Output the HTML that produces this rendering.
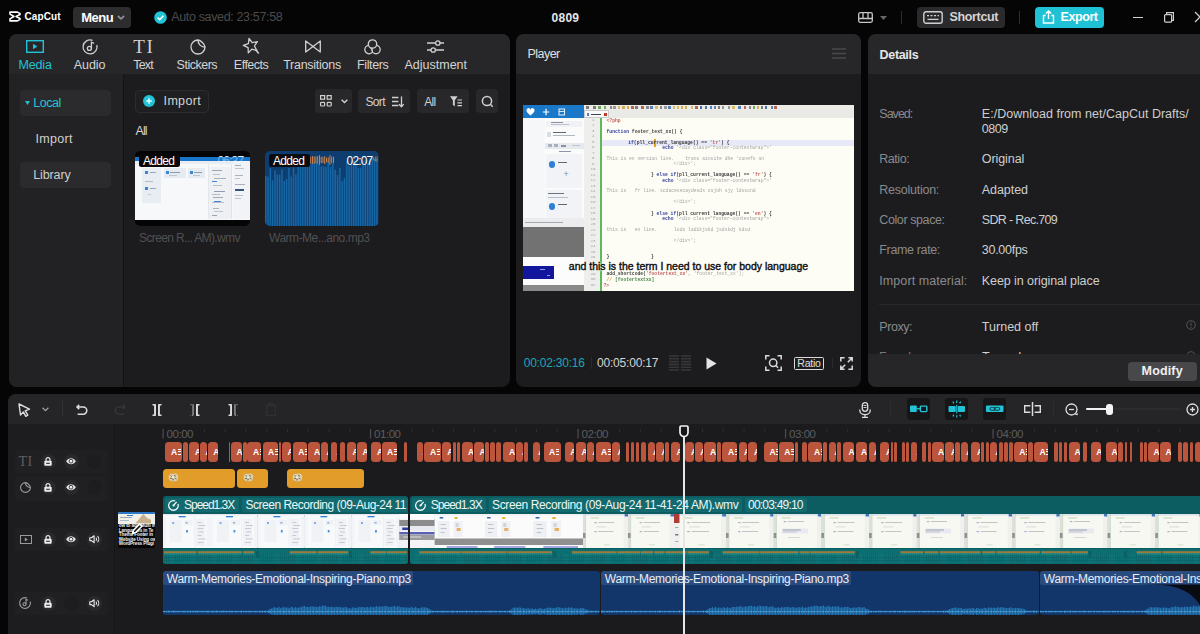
<!DOCTYPE html><html><head><meta charset="utf-8"><title>CapCut</title><style>
*{box-sizing:border-box;margin:0;padding:0}
html,body{width:1200px;height:634px;overflow:hidden;background:#050506;font-family:"Liberation Sans",sans-serif;color:#dcdcdc;font-size:12px}
.a{position:absolute}
.t{position:absolute;white-space:nowrap;line-height:1}
.panel{position:absolute;background:#1b1b1d;border-radius:8px;overflow:hidden}
.hdr{position:absolute;left:0;top:0;right:0;height:39.7px;background:#27272a}
svg{position:absolute;overflow:visible}
.btn{position:absolute;background:#2a2a2c;border-radius:4px}
.c{position:absolute;top:442px;height:19.5px;background:#bb553c;border-radius:3.5px;overflow:hidden}
.c::before{content:"A";position:absolute;left:5.6px;top:5.6px;font:bold 8.5px "Liberation Sans",sans-serif;color:#fff;line-height:1}
.c::after{content:"";position:absolute;left:12.3px;top:7.3px;width:3.2px;height:6px;background:linear-gradient(#fff 0 1px,transparent 1px 2.5px,#fff 2.5px 3.5px,transparent 3.5px 5px,#fff 5px 6px)}
</style></head><body>
<svg class="a" style="left:9px;top:11px" width="12" height="11" viewBox="0 0 13 12"><path d="M1 1.2h8.2l2.8 1.7v1L7.6 6l4.4 2.1v1L9.2 10.8H1V8.6L5.4 6 1 3.4z" fill="none" stroke="#fff" stroke-width="1.7" stroke-linejoin="round"/></svg>
<div class="t" style="left:24.5px;top:12px;font-size:10px;color:#fff;font-weight:700;letter-spacing:0.089px;">CapCut</div>
<div class="btn" style="left:73px;top:7px;width:57.5px;height:20.5px;background:#2d2d2f"></div>
<div class="t" style="left:81.2px;top:11px;font-size:13px;color:#fff;font-weight:700;letter-spacing:-0.481px;">Menu</div>
<svg style="left:116.5px;top:15px" width="8" height="5.5" viewBox="0 0 9 6"><path d="M1 1l3.5 3.2L8 1" fill="none" stroke="#8e8e90" stroke-width="2"/></svg>
<svg style="left:153.5px;top:11px" width="13" height="13" viewBox="0 0 13 13"><circle cx="6.5" cy="6.5" r="6.3" fill="#22c3d6"/><path d="M3.6 6.6l2.1 2 3.7-3.9" fill="none" stroke="#fff" stroke-width="1.5"/></svg>
<div class="t" style="left:171.2px;top:11.25px;font-size:12.5px;color:#4b4b4d;letter-spacing:-0.349px;">Auto saved: 23:57:58</div>
<div class="t" style="left:551.5px;top:11.5px;font-size:12px;color:#e6e6e6;font-weight:700;letter-spacing:0.268px;">0809</div>
<svg style="left:858px;top:12px" width="15" height="11" viewBox="0 0 15 11"><rect x="0.7" y="0.7" width="13.6" height="9.6" rx="1.5" fill="none" stroke="#c8c8c8" stroke-width="1.3"/><path d="M0.7 6.5h13.6M5 0.7v5.8M10 0.7v5.8" stroke="#c8c8c8" stroke-width="1.3"/></svg>
<svg style="left:880px;top:16px" width="7" height="4" viewBox="0 0 7 4"><path d="M0 0h7L3.5 4z" fill="#666"/></svg>
<div class="a" style="left:901px;top:11px;width:1px;height:13px;background:#2e2e30"></div>
<div class="btn" style="left:917px;top:6.5px;width:87.5px;height:21px;background:#2a2a2c"></div>
<svg style="left:923px;top:10.5px" width="20" height="13" viewBox="0 0 20 13"><rect x="0.8" y="0.8" width="18.4" height="11.4" rx="2.2" fill="none" stroke="#d0d0d0" stroke-width="1.4"/><path d="M4 4.6h2M7.5 4.6h2M11 4.6h2M14.5 4.6h1.5M4.5 8.4h11" stroke="#d0d0d0" stroke-width="1.3"/></svg>
<div class="t" style="left:949.5px;top:11.25px;font-size:12.5px;color:#d4d4d4;font-weight:700;letter-spacing:-0.34px;">Shortcut</div>
<div class="a" style="left:1019px;top:11px;width:1px;height:13px;background:#2e2e30"></div>
<div class="btn" style="left:1035px;top:6.5px;width:68.5px;height:21px;background:#1fc2d4"></div>
<svg style="left:1041.5px;top:9.5px" width="13" height="14" viewBox="0 0 13 14"><path d="M3.6 5.5H1.5v7.5h10V5.5H9.4M6.5 9V1.2M3.8 3.6L6.5 1l2.7 2.6" fill="none" stroke="#fff" stroke-width="1.4"/></svg>
<div class="t" style="left:1060.5px;top:11.25px;font-size:12.5px;color:#fff;font-weight:700;letter-spacing:-0.417px;">Export</div>
<div class="a" style="left:1133px;top:17px;width:10px;height:1.4px;background:#cfcfcf"></div>
<svg style="left:1164px;top:12px" width="10" height="11" viewBox="0 0 10 11"><rect x="0.6" y="2.6" width="7" height="7.6" rx="1" fill="none" stroke="#cfcfcf" stroke-width="1.2"/><path d="M2.6 2.4V0.7h6.8v7.6H7.8" fill="none" stroke="#cfcfcf" stroke-width="1.2"/></svg>
<svg style="left:1195px;top:12px" width="10" height="10" viewBox="0 0 10 10"><path d="M0 0l10 10M10 0L0 10" stroke="#cfcfcf" stroke-width="1.3"/></svg>
<div class="panel" style="left:9px;top:34px;width:500.5px;height:353px;background:#1c1c1e">
<div class="hdr"></div>
<div class="a" style="left:0;top:39.7px;width:113.5px;bottom:0;background:#222224"></div>
<div class="a" style="left:113.5px;top:39.7px;width:1px;bottom:0;background:#131315"></div>
</div>
<div class="t" style="left:18.4px;top:59.25px;font-size:12.5px;color:#22c3d6;letter-spacing:-0.111px;">Media</div>
<div class="t" style="left:73.7px;top:59.25px;font-size:12.5px;color:#d4d4d4;letter-spacing:-0.042px;">Audio</div>
<div class="t" style="left:133.2px;top:59.25px;font-size:12.5px;color:#d4d4d4;letter-spacing:-0.808px;">Text</div>
<div class="t" style="left:176.6px;top:59.25px;font-size:12.5px;color:#d4d4d4;letter-spacing:-0.493px;">Stickers</div>
<div class="t" style="left:233.8px;top:59.25px;font-size:12.5px;color:#d4d4d4;letter-spacing:-0.497px;">Effects</div>
<div class="t" style="left:283.2px;top:59.25px;font-size:12.5px;color:#d4d4d4;letter-spacing:-0.267px;">Transitions</div>
<div class="t" style="left:357px;top:59.25px;font-size:12.5px;color:#d4d4d4;letter-spacing:-0.371px;">Filters</div>
<div class="t" style="left:404.5px;top:59.25px;font-size:12.5px;color:#d4d4d4;letter-spacing:-0.003px;">Adjustment</div>
<svg style="left:26px;top:40px" width="18" height="13" viewBox="0 0 18 13"><rect x="0.7" y="0.7" width="16.6" height="11.6" fill="none" stroke="#22c3d6" stroke-width="1.4"/><path d="M7 3.8v5.4l4.4-2.7z" fill="#22c3d6"/></svg>
<svg style="left:81.5px;top:38.5px" width="16" height="16" viewBox="0 0 16 16"><path d="M10.6 1.4A7 7 0 1 0 14.8 6" fill="none" stroke="#d0d0d0" stroke-width="1.3"/><circle cx="7.4" cy="9.4" r="2" fill="none" stroke="#d0d0d0" stroke-width="1.3"/><path d="M9.4 9.4V3.2l2.6 1.2" fill="none" stroke="#d0d0d0" stroke-width="1.3"/></svg>
<div class="t" style="left:133.2px;top:36.5px;font-family:'Liberation Serif',serif;font-size:19px;color:#d0d0d0;letter-spacing:1.8px">TI</div>
<svg style="left:190px;top:39px" width="16" height="16" viewBox="0 0 16 16"><path d="M8 1a7 7 0 1 0 7 7c-3.6.400-7.4-3-7-7z" fill="none" stroke="#d0d0d0" stroke-width="1.3" stroke-linejoin="round"/><path d="M8 1c2.8.300 6.6 4 7 7" fill="none" stroke="#d0d0d0" stroke-width="1.3"/></svg>
<svg style="left:242.5px;top:38px" width="18" height="18" viewBox="0 0 18 18"><path d="M6 0.5L9.2 4.6L14.4 3.7L11.4 8L13.9 12.6L8.9 11.1L5.3 14.9L5.1 9.6L0.4 7.4L5.4 5.7z" fill="none" stroke="#d0d0d0" stroke-width="1.3" stroke-linejoin="round"/><path d="M13.2 12.6l2.6 2.8" stroke="#d0d0d0" stroke-width="1.5"/></svg>
<svg style="left:304.5px;top:40px" width="16" height="13" viewBox="0 0 16 13"><path d="M0.7 0.9v11.2L8 6.5zM15.3 0.9v11.2L8 6.5z" fill="none" stroke="#d0d0d0" stroke-width="1.3" stroke-linejoin="round"/></svg>
<svg style="left:364px;top:38.5px" width="17" height="16" viewBox="0 0 17 16"><circle cx="5" cy="10.6" r="4.2" fill="#27272a" stroke="#d0d0d0" stroke-width="1.3"/><circle cx="12" cy="10.6" r="4.2" fill="#27272a" stroke="#d0d0d0" stroke-width="1.3"/><circle cx="8.5" cy="5" r="4.2" fill="#27272a" stroke="#d0d0d0" stroke-width="1.3"/><path d="M6.4 8.7a4.2 4.2 0 0 1 2.1 3.6" fill="none" stroke="#d0d0d0" stroke-width="1.1"/></svg>
<svg style="left:427px;top:40px" width="17" height="13" viewBox="0 0 17 13"><path d="M0 3h8.5M13 3h4M0 10h4M8.5 10H17" stroke="#d0d0d0" stroke-width="1.3"/><circle cx="10.8" cy="3" r="2.2" fill="none" stroke="#d0d0d0" stroke-width="1.3"/><circle cx="6.2" cy="10" r="2.2" fill="none" stroke="#d0d0d0" stroke-width="1.3"/></svg>
<div class="btn" style="left:20px;top:89.5px;width:91px;height:26px;background:#2b2b2d;border-radius:4px"></div>
<svg style="left:25px;top:100.5px" width="5" height="4" viewBox="0 0 5 4"><path d="M0 0h5L2.5 4z" fill="#22c3d6"/></svg>
<div class="t" style="left:33.3px;top:96.75px;font-size:12.5px;color:#22c3d6;letter-spacing:-0.47px;">Local</div>
<div class="t" style="left:35.4px;top:133.25px;font-size:12.5px;color:#cfcfcf;letter-spacing:0.316px;">Import</div>
<div class="btn" style="left:20px;top:162px;width:91px;height:26px;background:#2b2b2d;border-radius:4px"></div>
<div class="t" style="left:33.3px;top:169.25px;font-size:12.5px;color:#cfcfcf;letter-spacing:-0.134px;">Library</div>
<div class="btn" style="left:135px;top:89.5px;width:74px;height:23px;background:#1f1f21;border:1px solid #2c2c2e"></div>
<svg style="left:142.5px;top:95px" width="12" height="12" viewBox="0 0 12 12"><circle cx="6" cy="6" r="6" fill="#22c3d6"/><path d="M6 3.2v5.6M3.2 6h5.6" stroke="#e8ffff" stroke-width="1.5"/></svg>
<div class="t" style="left:163.6px;top:95.25px;font-size:12.5px;color:#d4d4d4;letter-spacing:0.316px;">Import</div>
<div class="t" style="left:135.6px;top:125.25px;font-size:12.5px;color:#d4d4d4;letter-spacing:-0.946px;">All</div>
<div class="btn" style="left:314.5px;top:89px;width:37px;height:23.5px;background:#28282a"></div>
<div class="btn" style="left:357.5px;top:89px;width:52.5px;height:23.5px;background:#28282a"></div>
<div class="btn" style="left:416.5px;top:89px;width:52.5px;height:23.5px;background:#28282a"></div>
<div class="btn" style="left:475.5px;top:89px;width:22px;height:23.5px;background:#28282a"></div>
<svg style="left:319.5px;top:95px" width="12" height="12" viewBox="0 0 12 12"><rect x="0.6" y="0.6" width="4" height="3.6" fill="none" stroke="#d0d0d0" stroke-width="1.2"/><rect x="7.2" y="0.6" width="4" height="3.6" fill="none" stroke="#d0d0d0" stroke-width="1.2"/><rect x="0.6" y="7.4" width="4" height="3.6" rx="0.8" fill="none" stroke="#d0d0d0" stroke-width="1.2"/><rect x="7.2" y="7.4" width="4" height="3.6" rx="0.8" fill="none" stroke="#d0d0d0" stroke-width="1.2"/></svg>
<svg style="left:340.5px;top:99px" width="7" height="5" viewBox="0 0 7 5"><path d="M0.6 0.8l2.9 2.8L6.4 0.8" fill="none" stroke="#d0d0d0" stroke-width="1.4"/></svg>
<div class="t" style="left:365.5px;top:95.5px;font-size:12px;color:#d0d0d0;letter-spacing:-0.669px;">Sort</div>
<svg style="left:391.5px;top:95.5px" width="12" height="12" viewBox="0 0 12 12"><path d="M0 1.5h6.4M0 5.5h6.4M0 9.5h6.4M9.5 0.5v10M7 8.2l2.5 2.6 2.2-2.6" fill="none" stroke="#d0d0d0" stroke-width="1.3"/></svg>
<div class="t" style="left:424.2px;top:95.5px;font-size:12px;color:#d0d0d0;letter-spacing:-0.668px;">All</div>
<svg style="left:450px;top:96px" width="12" height="11" viewBox="0 0 12 11"><path d="M0 0.3h7.6L4.8 4.2v6L2.9 9V4.2z" fill="#d0d0d0"/><path d="M7.4 4h4.6M7.4 6.8h4.6M7.4 9.6h4.6" stroke="#d0d0d0" stroke-width="1.2"/></svg>
<svg style="left:480.5px;top:95px" width="13" height="13" viewBox="0 0 13 13"><circle cx="6" cy="6" r="4.6" fill="none" stroke="#d0d0d0" stroke-width="1.5"/><path d="M9.3 9.3l2.4 2.4" stroke="#d0d0d0" stroke-width="1.5"/></svg>
<div class="a" style="left:135px;top:151px;width:114.5px;height:75px;background:#050506;border-radius:5px;overflow:hidden">
<div class="a" style="left:0;top:5.5px;width:100%;height:63px;background:#f7f8fa"></div>
<div class="a" style="left:0;top:5.5px;width:100%;height:4.5px;background:#1877c9"></div>
<div class="a" style="left:0px;top:10px;width:114.5px;height:3px;background:#e9ecf1"></div>
<div class="a" style="left:6.5px;top:17px;width:19px;height:35px;background:#e8ecf3"></div>
<div class="a" style="left:10px;top:20px;width:3px;height:3px;background:#3b86d2"></div>
<div class="a" style="left:15px;top:21px;width:6px;height:1.2px;background:#9aa7b8"></div>
<div class="a" style="left:10px;top:36px;width:3px;height:3px;background:#3b86d2"></div>
<div class="a" style="left:15px;top:37px;width:6px;height:1.2px;background:#9aa7b8"></div>
<div class="a" style="left:10px;top:30px;width:8px;height:1px;background:#b5bcc8"></div>
<div class="a" style="left:13px;top:43px;width:3px;height:1px;background:#c4c9d2"></div>
<div class="a" style="left:28.5px;top:17px;width:22px;height:10px;background:#e6eaf1"></div>
<div class="a" style="left:31px;top:20px;width:2.5px;height:2.5px;background:#3b86d2"></div>
<div class="a" style="left:35px;top:20.5px;width:10px;height:1.2px;background:#8f9bb0"></div>
<div class="a" style="left:34px;top:24px;width:8px;height:0.8px;background:#c0c6d0"></div>
<div class="a" style="left:53px;top:17px;width:17px;height:10px;background:#e6eaf1"></div>
<div class="a" style="left:55px;top:20px;width:2.5px;height:2.5px;background:#3b86d2"></div>
<div class="a" style="left:59px;top:20.5px;width:8px;height:1.2px;background:#8f9bb0"></div>
<div class="a" style="left:58px;top:24px;width:7px;height:0.8px;background:#c0c6d0"></div>
<div class="a" style="left:73.5px;top:16px;width:22px;height:52px;background:#eef0f4"></div>
<div class="a" style="left:77px;top:19px;width:10px;height:1px;background:#9aa5b5"></div>
<div class="a" style="left:78px;top:23px;width:7px;height:1px;background:#b9c0cc"></div>
<div class="a" style="left:79px;top:27px;width:12px;height:1px;background:#a8b2c0"></div>
<div class="a" style="left:77px;top:30px;width:5px;height:1px;background:#3b86d2"></div>
<div class="a" style="left:78px;top:34px;width:9px;height:1px;background:#b9c0cc"></div>
<div class="a" style="left:79px;top:40px;width:11px;height:1px;background:#8f9bb0"></div>
<div class="a" style="left:77px;top:43px;width:8px;height:1px;background:#b9c0cc"></div>
<div class="a" style="left:78px;top:46px;width:10px;height:1px;background:#a0aab8"></div>
<div class="a" style="left:79px;top:50px;width:7px;height:1px;background:#3b86d2"></div>
<div class="a" style="left:77px;top:51px;width:12px;height:1px;background:#b9c0cc"></div>
<div class="a" style="left:78px;top:57px;width:6px;height:1px;background:#a8b2c0"></div>
<div class="a" style="left:79px;top:60px;width:9px;height:1px;background:#c0c6d0"></div>
<div class="a" style="left:77px;top:64px;width:5px;height:1px;background:#9aa5b5"></div>
<div class="a" style="left:97.5px;top:10px;width:17px;height:58px;background:#f1f3f6"></div>
<div class="a" style="left:100px;top:14px;width:6px;height:1.2px;background:#a0aab8"></div>
<div class="a" style="left:100px;top:17px;width:9px;height:1.2px;background:#c0c6d0"></div>
<div class="a" style="left:100px;top:24px;width:8px;height:1.2px;background:#a8b2c0"></div>
<div class="a" style="left:100px;top:27px;width:5px;height:1.2px;background:#c0c6d0"></div>
<div class="a" style="left:100px;top:33px;width:10px;height:1.2px;background:#a8b2c0"></div>
<div class="a" style="left:100px;top:38px;width:9px;height:1.6px;background:#35527a"></div>
<div class="a" style="left:100px;top:44px;width:8px;height:1.2px;background:#b9c0cc"></div>
<div class="a" style="left:100px;top:47px;width:6px;height:1.2px;background:#c0c6d0"></div>
<div class="a" style="left:96px;top:13px;width:0.6px;height:55px;background:#dfe3ea"></div>
<div class="a" style="left:72.5px;top:13px;width:0.6px;height:55px;background:#e4e7ec"></div>
<div class="t" style="left:82.5px;top:3.8px;font-size:12px;color:#e6f3ff;letter-spacing:-0.857px;">06:37</div>
<div class="a" style="left:0;top:5.5px;width:100%;height:4.5px;background:#1877c9;opacity:.55"></div>
<div class="a" style="left:4px;top:3px;width:40.5px;height:13px;background:#08080a;border-radius:2.5px"></div>
<div class="t" style="left:8px;top:4px;font-size:12px;color:#fff;letter-spacing:-0.675px;">Added</div>
</div>
<div class="t" style="left:139px;top:231.5px;font-size:12px;color:#505052;letter-spacing:-0.622px;">Screen R... AM).wmv</div>
<svg style="left:265px;top:151px;border-radius:5px;overflow:hidden" width="113.5" height="75" viewBox="0 0 113.5 75"><rect width="113.5" height="75" fill="#0e3e70"/><rect x="0" y="24.7" width="1.47" height="50.3" fill="#1767a6"/><rect x="2.32" y="25.7" width="1.47" height="49.3" fill="#1767a6"/><rect x="4.63" y="17" width="1.47" height="58" fill="#1767a6"/><rect x="6.95" y="29.4" width="1.47" height="45.6" fill="#1767a6"/><rect x="9.27" y="19.7" width="1.47" height="55.3" fill="#1767a6"/><rect x="11.58" y="23.5" width="1.47" height="51.5" fill="#1767a6"/><rect x="13.9" y="23.6" width="1.47" height="51.4" fill="#1767a6"/><rect x="16.21" y="18.4" width="1.47" height="56.6" fill="#1767a6"/><rect x="18.53" y="29.9" width="1.47" height="45.1" fill="#1767a6"/><rect x="20.85" y="27.9" width="1.47" height="47.1" fill="#1767a6"/><rect x="23.16" y="17" width="1.47" height="58" fill="#1767a6"/><rect x="25.48" y="25.5" width="1.47" height="49.5" fill="#1767a6"/><rect x="27.8" y="16.5" width="1.47" height="58.5" fill="#1767a6"/><rect x="30.11" y="23.6" width="1.47" height="51.4" fill="#1767a6"/><rect x="32.43" y="15.2" width="1.47" height="59.8" fill="#1767a6"/><rect x="34.74" y="15.4" width="1.47" height="59.6" fill="#1767a6"/><rect x="37.06" y="14.6" width="1.47" height="60.4" fill="#1767a6"/><rect x="39.38" y="15.5" width="1.47" height="59.5" fill="#1767a6"/><rect x="41.69" y="9.7" width="1.47" height="65.3" fill="#1767a6"/><rect x="44.01" y="10.5" width="1.47" height="64.5" fill="#1767a6"/><rect x="46.33" y="12.1" width="1.47" height="62.9" fill="#1767a6"/><rect x="48.64" y="11.1" width="1.47" height="63.9" fill="#1767a6"/><rect x="50.96" y="11.7" width="1.47" height="63.3" fill="#1767a6"/><rect x="53.28" y="13.1" width="1.47" height="61.9" fill="#1767a6"/><rect x="55.59" y="15.3" width="1.47" height="59.7" fill="#1767a6"/><rect x="57.91" y="15.5" width="1.47" height="59.5" fill="#1767a6"/><rect x="60.22" y="15.9" width="1.47" height="59.1" fill="#1767a6"/><rect x="62.54" y="10.1" width="1.47" height="64.9" fill="#1767a6"/><rect x="64.86" y="15.8" width="1.47" height="59.2" fill="#1767a6"/><rect x="67.17" y="13" width="1.47" height="62" fill="#1767a6"/><rect x="69.49" y="19" width="1.47" height="56" fill="#1767a6"/><rect x="71.81" y="24" width="1.47" height="51" fill="#1767a6"/><rect x="74.12" y="16.9" width="1.47" height="58.1" fill="#1767a6"/><rect x="76.44" y="29.9" width="1.47" height="45.1" fill="#1767a6"/><rect x="78.76" y="27.2" width="1.47" height="47.8" fill="#1767a6"/><rect x="81.07" y="10.2" width="1.47" height="64.8" fill="#1767a6"/><rect x="83.39" y="15.2" width="1.47" height="59.8" fill="#1767a6"/><rect x="85.7" y="9.4" width="1.47" height="65.6" fill="#1767a6"/><rect x="88.02" y="9.4" width="1.47" height="65.6" fill="#1767a6"/><rect x="90.34" y="11.6" width="1.47" height="63.4" fill="#1767a6"/><rect x="92.65" y="16.8" width="1.47" height="58.2" fill="#1767a6"/><rect x="94.97" y="17" width="1.47" height="58" fill="#1767a6"/><rect x="97.29" y="9.6" width="1.47" height="65.4" fill="#1767a6"/><rect x="99.6" y="9.3" width="1.47" height="65.7" fill="#1767a6"/><rect x="101.92" y="12.3" width="1.47" height="62.7" fill="#1767a6"/><rect x="104.23" y="8" width="1.47" height="67" fill="#1767a6"/><rect x="106.55" y="8" width="1.47" height="67" fill="#1767a6"/><rect x="108.87" y="8" width="1.47" height="67" fill="#1767a6"/><rect x="111.18" y="8" width="1.47" height="67" fill="#1767a6"/><rect x="43.5" y="5.9" width="0.9" height="6.2" fill="#e08b4a"/><rect x="45.25" y="5.7" width="0.9" height="6.6" fill="#e08b4a"/><rect x="47" y="5.2" width="0.9" height="7.5" fill="#e08b4a"/><rect x="48.75" y="5.4" width="0.9" height="7.2" fill="#e08b4a"/><rect x="50.5" y="5.5" width="0.9" height="6.9" fill="#e08b4a"/><rect x="52.25" y="5.3" width="0.9" height="7.3" fill="#e08b4a"/><rect x="54" y="4.2" width="0.9" height="9.6" fill="#e08b4a"/><rect x="55.75" y="5.7" width="0.9" height="6.5" fill="#e08b4a"/><rect x="57.5" y="6" width="0.9" height="6" fill="#e08b4a"/><rect x="59.25" y="5" width="0.9" height="8" fill="#e08b4a"/><rect x="61" y="6.7" width="0.9" height="4.7" fill="#e08b4a"/><rect x="62.75" y="6.4" width="0.9" height="5.1" fill="#e08b4a"/><rect x="64.5" y="4.1" width="0.9" height="9.8" fill="#e08b4a"/><rect x="66.25" y="5.7" width="0.9" height="6.6" fill="#e08b4a"/><rect x="68" y="5.6" width="0.9" height="6.8" fill="#e08b4a"/><rect x="108" y="6.5" width="0.9" height="3" fill="#e08b4a" opacity=".8"/><rect x="109.8" y="5.7" width="0.9" height="4.7" fill="#e08b4a" opacity=".8"/><rect x="111.6" y="5.3" width="0.9" height="5.3" fill="#e08b4a" opacity=".8"/></svg>
<div class="a" style="left:269px;top:154px;width:40.5px;height:13px;background:#0a0c10;border-radius:2.5px"></div>
<div class="t" style="left:273px;top:155px;font-size:12px;color:#fff;letter-spacing:-0.675px;">Added</div>
<div class="t" style="left:346.6px;top:155px;font-size:12px;color:#fff;letter-spacing:-0.857px;">02:07</div>
<div class="t" style="left:269px;top:231.5px;font-size:12px;color:#505052;letter-spacing:-0.495px;">Warm-Me...ano.mp3</div>
<div class="panel" style="left:516px;top:34px;width:344.5px;height:353px;background:#1c1c1e"><div class="hdr"></div></div>
<div class="t" style="left:527.5px;top:48.25px;font-size:12.5px;color:#e0e0e0;letter-spacing:-0.546px;">Player</div>
<svg style="left:832px;top:48px" width="14" height="11" viewBox="0 0 14 11"><path d="M0 1h14M0 5.5h14M0 10h14" stroke="#4a4a4c" stroke-width="1.4"/></svg>
<div class="a" style="left:523px;top:104.7px;width:331px;height:186px;background:#fdfdf6;overflow:hidden">
<div class="a" style="left:0px;top:0px;width:61px;height:13px;background:#1a78c8;"></div>
<div class="a" style="left:0px;top:13px;width:61px;height:101px;background:#f6f7f9;"></div>
<svg style="left:3px;top:3px" width="44" height="8" viewBox="0 0 44 8"><path d="M4.5 7.5C2 5.5 0.5 4 0.5 2.5A2 2 0 0 1 4.5 1.8 2 2 0 0 1 8.5 2.5C8.5 4 7 5.5 4.5 7.5z" fill="#fff"/><path d="M20 0.8v6.4M16.8 4h6.4" stroke="#fff" stroke-width="1.2"/><rect x="33" y="1" width="5.5" height="6" fill="none" stroke="#fff" stroke-width="0.9"/><path d="M33 3.5h5.5" stroke="#fff" stroke-width="0.8"/></svg>
<div class="a" style="left:22px;top:14px;width:39px;height:100px;background:#fbfbfc;"></div>
<div class="a" style="left:23px;top:16px;width:36px;height:6px;background:#f0f2f5;"></div>
<div class="a" style="left:28px;top:17px;width:12px;height:1px;background:#8b93a0;"></div>
<div class="a" style="left:28px;top:19.5px;width:18px;height:0.8px;background:#bcc2cc;"></div>
<div class="a" style="left:24px;top:27px;width:4px;height:5px;background:#d8dce3;"></div>
<div class="a" style="left:30px;top:27.5px;width:13px;height:1.2px;background:#5f6875;"></div>
<div class="a" style="left:30px;top:30.5px;width:22px;height:0.8px;background:#b0b6c0;"></div>
<div class="a" style="left:22px;top:38px;width:39px;height:6px;background:#e6e9ee;"></div>
<div class="a" style="left:25px;top:39.5px;width:4px;height:3px;background:#a9b0bb;"></div>
<div class="a" style="left:31px;top:39.5px;width:4px;height:3px;background:#a9b0bb;"></div>
<div class="a" style="left:38px;top:40px;width:5px;height:2px;background:#8b93a0;"></div>
<div class="a" style="left:49px;top:40px;width:8px;height:1px;background:#c0c5cd;"></div>
<div class="a" style="left:36px;top:46px;width:12px;height:1.5px;background:#8d96a6;"></div>
<div class="a" style="left:23px;top:49px;width:36px;height:34px;background:#f1f3f6;"></div>
<div class="a" style="left:25.5px;top:56.5px;width:6.5px;height:6.5px;border-radius:50%;background:#2f7fd6"></div>
<div class="a" style="left:35px;top:57px;width:9px;height:1.2px;background:#5f6875;"></div>
<div class="t" style="left:40.5px;top:65px;font-size:9px;color:#8a919c">+</div>
<div class="a" style="left:23px;top:85px;width:36px;height:29px;background:#f1f3f6;"></div>
<div class="a" style="left:25px;top:88px;width:16px;height:1.2px;background:#6a7380;"></div>
<div class="a" style="left:25px;top:92px;width:20px;height:0.8px;background:#b8bec8;"></div>
<div class="a" style="left:25.5px;top:98.5px;width:6.5px;height:6.5px;border-radius:50%;background:#2f7fd6"></div>
<div class="a" style="left:35px;top:99.5px;width:9px;height:1.2px;background:#5f6875;"></div>
<div class="a" style="left:0px;top:113px;width:61px;height:9px;background:#ececee;"></div>
<div class="a" style="left:2px;top:117px;width:38px;height:0.9px;background:#a5a8ae;"></div>
<div class="a" style="left:0px;top:122.5px;width:61px;height:29.5px;background:#727272;"></div>
<div class="a" style="left:0px;top:152px;width:61px;height:35px;background:#fcfcfc;"></div>
<div class="a" style="left:0px;top:161.5px;width:30.5px;height:13.3px;background:#12169c;"></div>
<div class="a" style="left:0px;top:180.5px;width:61px;height:6px;background:#8a8a8a;"></div>
<div class="a" style="left:17px;top:164px;width:5px;height:0.8px;background:#8f9be0;"></div>
<div class="a" style="left:24px;top:170px;width:3px;height:0.8px;background:#8f9be0;"></div>
<div class="a" style="left:61px;top:0px;width:270px;height:5.5px;background:#ecebe6;"></div>
<div class="a" style="left:63px;top:1px;width:3px;height:3.5px;background:#666;opacity:.85"></div>
<div class="a" style="left:69.5px;top:1px;width:3px;height:3.5px;background:#666;opacity:.85"></div>
<div class="a" style="left:74.5px;top:1px;width:3px;height:3.5px;background:#5a9a4a;opacity:.85"></div>
<div class="a" style="left:81px;top:1px;width:2px;height:3.5px;background:#5a9a4a;opacity:.85"></div>
<div class="a" style="left:86.5px;top:1px;width:2px;height:3.5px;background:#777;opacity:.85"></div>
<div class="a" style="left:90px;top:1px;width:3px;height:3.5px;background:#888;opacity:.85"></div>
<div class="a" style="left:94.5px;top:1px;width:2.5px;height:3.5px;background:#d0b050;opacity:.85"></div>
<div class="a" style="left:99px;top:1px;width:3px;height:3.5px;background:#c9a23a;opacity:.85"></div>
<div class="a" style="left:103.5px;top:1px;width:2px;height:3.5px;background:#c9a23a;opacity:.85"></div>
<div class="a" style="left:107.5px;top:1px;width:3px;height:3.5px;background:#b04a3a;opacity:.85"></div>
<div class="a" style="left:112px;top:1px;width:2.5px;height:3.5px;background:#666;opacity:.85"></div>
<div class="a" style="left:118px;top:1px;width:3px;height:3.5px;background:#b04a3a;opacity:.85"></div>
<div class="a" style="left:123px;top:1px;width:2.5px;height:3.5px;background:#777;opacity:.85"></div>
<div class="a" style="left:127px;top:1px;width:2.5px;height:3.5px;background:#3d6fb5;opacity:.85"></div>
<div class="a" style="left:132px;top:1px;width:3px;height:3.5px;background:#d0b050;opacity:.85"></div>
<div class="a" style="left:136.5px;top:1px;width:2.5px;height:3.5px;background:#777;opacity:.85"></div>
<div class="a" style="left:141px;top:1px;width:2.5px;height:3.5px;background:#888;opacity:.85"></div>
<div class="a" style="left:145px;top:1px;width:3px;height:3.5px;background:#3d6fb5;opacity:.85"></div>
<div class="a" style="left:149.5px;top:1px;width:2px;height:3.5px;background:#d0b050;opacity:.85"></div>
<div class="a" style="left:154px;top:1px;width:2px;height:3.5px;background:#d0b050;opacity:.85"></div>
<div class="a" style="left:157.5px;top:1px;width:2px;height:3.5px;background:#c9a23a;opacity:.85"></div>
<div class="a" style="left:161.5px;top:1px;width:2.5px;height:3.5px;background:#c9a23a;opacity:.85"></div>
<div class="a" style="left:167.5px;top:1px;width:2.5px;height:3.5px;background:#d0b050;opacity:.85"></div>
<div class="a" style="left:171.5px;top:1px;width:3px;height:3.5px;background:#b04a3a;opacity:.85"></div>
<div class="a" style="left:177px;top:1px;width:2px;height:3.5px;background:#2a5aa0;opacity:.85"></div>
<div class="a" style="left:181.5px;top:1px;width:2px;height:3.5px;background:#2a5aa0;opacity:.85"></div>
<div class="a" style="left:187px;top:1px;width:2px;height:3.5px;background:#3d6fb5;opacity:.85"></div>
<div class="a" style="left:191px;top:1px;width:2px;height:3.5px;background:#3d6fb5;opacity:.85"></div>
<div class="a" style="left:194.5px;top:1px;width:2.5px;height:3.5px;background:#666;opacity:.85"></div>
<div class="a" style="left:199px;top:1px;width:2px;height:3.5px;background:#888;opacity:.85"></div>
<div class="a" style="left:204.5px;top:1px;width:2px;height:3.5px;background:#888;opacity:.85"></div>
<div class="a" style="left:208.5px;top:1px;width:3px;height:3.5px;background:#d0b050;opacity:.85"></div>
<div class="a" style="left:215px;top:1px;width:2.5px;height:3.5px;background:#3d6fb5;opacity:.85"></div>
<div class="a" style="left:221px;top:1px;width:2px;height:3.5px;background:#b04a3a;opacity:.85"></div>
<div class="a" style="left:225.5px;top:1px;width:2px;height:3.5px;background:#777;opacity:.85"></div>
<div class="a" style="left:229.5px;top:1px;width:2.5px;height:3.5px;background:#5a9a4a;opacity:.85"></div>
<div class="a" style="left:233.5px;top:1px;width:2px;height:3.5px;background:#c9a23a;opacity:.85"></div>
<div class="a" style="left:237.5px;top:1px;width:2.5px;height:3.5px;background:#666;opacity:.85"></div>
<div class="a" style="left:241.5px;top:1px;width:2.5px;height:3.5px;background:#2a5aa0;opacity:.85"></div>
<div class="a" style="left:247.5px;top:1px;width:2px;height:3.5px;background:#3d6fb5;opacity:.85"></div>
<div class="a" style="left:251px;top:1px;width:3px;height:3.5px;background:#b04a3a;opacity:.85"></div>
<div class="a" style="left:61px;top:5.5px;width:270px;height:7.5px;background:#e9e9e6;"></div>
<div class="a" style="left:61px;top:5.5px;width:25px;height:7.5px;background:#fafafa;border:0.5px solid #c8c8c8"></div>
<div class="a" style="left:64px;top:8px;width:2px;height:3px;background:#5a7fc0;"></div>
<div class="a" style="left:68px;top:9px;width:10px;height:1.3px;background:#444;"></div>
<div class="a" style="left:81px;top:8px;width:2.5px;height:3px;background:#c0392b;"></div>
<div class="a" style="left:61px;top:13px;width:16px;height:174px;background:#eeeeec;"></div>
<div class="a" style="left:77px;top:13px;width:1.6px;height:174px;background:#5cb85c;"></div>
<div class="t" style="left:69px;top:13.1px;font-family:'Liberation Mono',monospace;font-size:4.2px;color:#8a8a8a;opacity:.75">1</div>
<div class="t" style="left:69px;top:18.6px;font-family:'Liberation Mono',monospace;font-size:4.2px;color:#8a8a8a;opacity:.75">2</div>
<div class="t" style="left:69px;top:24.1px;font-family:'Liberation Mono',monospace;font-size:4.2px;color:#8a8a8a;opacity:.75">3</div>
<div class="t" style="left:69px;top:29.6px;font-family:'Liberation Mono',monospace;font-size:4.2px;color:#8a8a8a;opacity:.75">4</div>
<div class="t" style="left:69px;top:35.1px;font-family:'Liberation Mono',monospace;font-size:4.2px;color:#8a8a8a;opacity:.75">5</div>
<div class="t" style="left:69px;top:40.6px;font-family:'Liberation Mono',monospace;font-size:4.2px;color:#8a8a8a;opacity:.75">6</div>
<div class="t" style="left:69px;top:46.1px;font-family:'Liberation Mono',monospace;font-size:4.2px;color:#8a8a8a;opacity:.75">7</div>
<div class="t" style="left:69px;top:51.6px;font-family:'Liberation Mono',monospace;font-size:4.2px;color:#8a8a8a;opacity:.75">8</div>
<div class="t" style="left:69px;top:57.1px;font-family:'Liberation Mono',monospace;font-size:4.2px;color:#8a8a8a;opacity:.75">9</div>
<div class="t" style="left:67.5px;top:62.6px;font-family:'Liberation Mono',monospace;font-size:4.2px;color:#8a8a8a;opacity:.75">10</div>
<div class="t" style="left:67.5px;top:68.1px;font-family:'Liberation Mono',monospace;font-size:4.2px;color:#8a8a8a;opacity:.75">11</div>
<div class="t" style="left:67.5px;top:73.6px;font-family:'Liberation Mono',monospace;font-size:4.2px;color:#8a8a8a;opacity:.75">12</div>
<div class="t" style="left:67.5px;top:79.1px;font-family:'Liberation Mono',monospace;font-size:4.2px;color:#8a8a8a;opacity:.75">13</div>
<div class="t" style="left:67.5px;top:84.6px;font-family:'Liberation Mono',monospace;font-size:4.2px;color:#8a8a8a;opacity:.75">14</div>
<div class="t" style="left:67.5px;top:90.1px;font-family:'Liberation Mono',monospace;font-size:4.2px;color:#8a8a8a;opacity:.75">15</div>
<div class="t" style="left:67.5px;top:95.6px;font-family:'Liberation Mono',monospace;font-size:4.2px;color:#8a8a8a;opacity:.75">16</div>
<div class="t" style="left:67.5px;top:101.1px;font-family:'Liberation Mono',monospace;font-size:4.2px;color:#8a8a8a;opacity:.75">17</div>
<div class="t" style="left:67.5px;top:106.6px;font-family:'Liberation Mono',monospace;font-size:4.2px;color:#8a8a8a;opacity:.75">18</div>
<div class="t" style="left:67.5px;top:112.1px;font-family:'Liberation Mono',monospace;font-size:4.2px;color:#8a8a8a;opacity:.75">19</div>
<div class="t" style="left:67.5px;top:117.6px;font-family:'Liberation Mono',monospace;font-size:4.2px;color:#8a8a8a;opacity:.75">20</div>
<div class="t" style="left:67.5px;top:123.1px;font-family:'Liberation Mono',monospace;font-size:4.2px;color:#8a8a8a;opacity:.75">21</div>
<div class="t" style="left:67.5px;top:128.6px;font-family:'Liberation Mono',monospace;font-size:4.2px;color:#8a8a8a;opacity:.75">22</div>
<div class="t" style="left:67.5px;top:134.1px;font-family:'Liberation Mono',monospace;font-size:4.2px;color:#8a8a8a;opacity:.75">23</div>
<div class="t" style="left:67.5px;top:139.6px;font-family:'Liberation Mono',monospace;font-size:4.2px;color:#8a8a8a;opacity:.75">24</div>
<div class="t" style="left:67.5px;top:145.1px;font-family:'Liberation Mono',monospace;font-size:4.2px;color:#8a8a8a;opacity:.75">25</div>
<div class="t" style="left:67.5px;top:150.6px;font-family:'Liberation Mono',monospace;font-size:4.2px;color:#8a8a8a;opacity:.75">26</div>
<div class="t" style="left:67.5px;top:156.1px;font-family:'Liberation Mono',monospace;font-size:4.2px;color:#8a8a8a;opacity:.75">27</div>
<div class="t" style="left:67.5px;top:161.6px;font-family:'Liberation Mono',monospace;font-size:4.2px;color:#8a8a8a;opacity:.75">28</div>
<div class="t" style="left:67.5px;top:167.1px;font-family:'Liberation Mono',monospace;font-size:4.2px;color:#8a8a8a;opacity:.75">29</div>
<div class="t" style="left:67.5px;top:172.6px;font-family:'Liberation Mono',monospace;font-size:4.2px;color:#8a8a8a;opacity:.75">30</div>
<div class="t" style="left:67.5px;top:178.1px;font-family:'Liberation Mono',monospace;font-size:4.2px;color:#8a8a8a;opacity:.75">31</div>
<div class="a" style="left:79px;top:35.5px;width:252px;height:6px;background:#e7e8f8;"></div>
<div class="a" style="left:130.5px;top:34px;width:2px;height:8px;background:#e8a317;"></div>
<div class="t" style="left:83.5px;top:13.1px;font-family:'Liberation Mono',monospace;font-size:4.7px;line-height:5.5px;white-space:pre;color:#2c2c2c;font-weight:700;opacity:.92"><span style="color:#c0504d">&lt;?php</span></div>
<div class="t" style="left:83.5px;top:24.4px;font-family:'Liberation Mono',monospace;font-size:4.7px;line-height:5.5px;white-space:pre;color:#2c2c2c;font-weight:700;opacity:.92"><b style="color:#1c2c96">function</b> footer_text_xx() {</div>
<div class="t" style="left:105.2px;top:35.7px;font-family:'Liberation Mono',monospace;font-size:4.7px;line-height:5.5px;white-space:pre;color:#2c2c2c;font-weight:700;opacity:.92"><b style="color:#1c2c96">if</b>(pll_current_language() == <span style="color:#c0504d">'tr'</span>) {</div>
<div class="t" style="left:139.2px;top:40.6px;font-family:'Liberation Mono',monospace;font-size:4.7px;line-height:5.5px;white-space:pre;color:#2c2c2c;font-weight:700;opacity:.92"><b style="color:#1c2c96">echo</b><span style="color:#9b9b9b;font-weight:400"> '&lt;div class="footer-contentwrap"&gt;'</span></div>
<div class="t" style="left:83.5px;top:51.2px;font-family:'Liberation Mono',monospace;font-size:4.7px;line-height:5.5px;white-space:pre;color:#2c2c2c;font-weight:700;opacity:.92"><span style="color:#9b9b9b;font-weight:400">This is en version line.    trans ainsite dhe 'conefs on</span></div>
<div class="t" style="left:150.5px;top:56.7px;font-family:'Liberation Mono',monospace;font-size:4.7px;line-height:5.5px;white-space:pre;color:#2c2c2c;font-weight:700;opacity:.92"><span style="color:#9b9b9b;font-weight:400">&lt;/div&gt;';</span></div>
<div class="t" style="left:127.9px;top:67.4px;font-family:'Liberation Mono',monospace;font-size:4.7px;line-height:5.5px;white-space:pre;color:#2c2c2c;font-weight:700;opacity:.92">} <b style="color:#1c2c96">else if</b>(pll_current_language() == <span style="color:#c0504d">'fr'</span>) {</div>
<div class="t" style="left:139.2px;top:73.2px;font-family:'Liberation Mono',monospace;font-size:4.7px;line-height:5.5px;white-space:pre;color:#2c2c2c;font-weight:700;opacity:.92"><b style="color:#1c2c96">echo</b><span style="color:#9b9b9b;font-weight:400"> '&lt;div class="footer-contentwrap"&gt;'</span></div>
<div class="t" style="left:83.5px;top:83.6px;font-family:'Liberation Mono',monospace;font-size:4.7px;line-height:5.5px;white-space:pre;color:#2c2c2c;font-weight:700;opacity:.92"><span style="color:#9b9b9b;font-weight:400">This is   fr line. scdacesecaydesds cojoh sjy ldsscnd</span></div>
<div class="t" style="left:150.5px;top:94.6px;font-family:'Liberation Mono',monospace;font-size:4.7px;line-height:5.5px;white-space:pre;color:#2c2c2c;font-weight:700;opacity:.92"><span style="color:#9b9b9b;font-weight:400">&lt;/div&gt;';</span></div>
<div class="t" style="left:127.9px;top:105.9px;font-family:'Liberation Mono',monospace;font-size:4.7px;line-height:5.5px;white-space:pre;color:#2c2c2c;font-weight:700;opacity:.92">} <b style="color:#1c2c96">else if</b>(pll current language() == <span style="color:#c0504d">'en'</span>) {</div>
<div class="t" style="left:139.2px;top:111.1px;font-family:'Liberation Mono',monospace;font-size:4.7px;line-height:5.5px;white-space:pre;color:#2c2c2c;font-weight:700;opacity:.92"><b style="color:#1c2c96">echo</b><span style="color:#9b9b9b;font-weight:400"> '&lt;div class="footer-contentwrap"&gt;'</span></div>
<div class="t" style="left:83.5px;top:122.1px;font-family:'Liberation Mono',monospace;font-size:4.7px;line-height:5.5px;white-space:pre;color:#2c2c2c;font-weight:700;opacity:.92"><span style="color:#9b9b9b;font-weight:400">this is   en line.      luds ladikjskd jsdskdj kdsd</span></div>
<div class="t" style="left:150.5px;top:133.1px;font-family:'Liberation Mono',monospace;font-size:4.7px;line-height:5.5px;white-space:pre;color:#2c2c2c;font-weight:700;opacity:.92"><span style="color:#9b9b9b;font-weight:400">&lt;/div&gt;';</span></div>
<div class="t" style="left:83.5px;top:149.6px;font-family:'Liberation Mono',monospace;font-size:4.7px;line-height:5.5px;white-space:pre;color:#2c2c2c;font-weight:700;opacity:.92">}</div>
<div class="t" style="left:127.9px;top:149.6px;font-family:'Liberation Mono',monospace;font-size:4.7px;line-height:5.5px;white-space:pre;color:#2c2c2c;font-weight:700;opacity:.92">}</div>
<div class="t" style="left:83.5px;top:166.7px;font-family:'Liberation Mono',monospace;font-size:4.7px;line-height:5.5px;white-space:pre;color:#2c2c2c;font-weight:700;opacity:.92">add_shortcode(<span style="color:#c0504d">'footertext_xx'</span><span style="color:#9b9b9b;font-weight:400">, 'footer_text_xx');</span></div>
<div class="t" style="left:83.5px;top:172.2px;font-family:'Liberation Mono',monospace;font-size:4.7px;line-height:5.5px;white-space:pre;color:#2c2c2c;font-weight:700;opacity:.92"><span style="color:#d88a3a">//</span> <span style="color:#3a7a3a">[footertextxx]</span></div>
<div class="t" style="left:80.5px;top:178.1px;font-family:'Liberation Mono',monospace;font-size:4.7px;line-height:5.5px;white-space:pre;color:#2c2c2c;font-weight:700;opacity:.92"><span style="color:#c0504d">?&gt;</span></div>
<div class="t" style="left:45.8px;top:156px;font-size:10.5px;color:#0c0c0c;-webkit-text-stroke:0.4px #111;text-shadow:0 0 2px #fff,0 0 2px #fff,0 0 3px #fff">and this is the term I need to use for body language</div>
</div>
<div class="t" style="left:523.7px;top:357px;font-size:12px;color:#1ea6b8;letter-spacing:-0.209px;">00:02:30:16</div>
<div class="t" style="left:597px;top:357px;font-size:12px;color:#d4d4d4;letter-spacing:-0.189px;">00:05:00:17</div>
<div class="a" style="left:590.5px;top:357px;width:1px;height:12px;background:#2a2a2c"></div>
<svg style="left:669px;top:355px" width="22" height="16" viewBox="0 0 22 16"><g stroke="#37373a" stroke-width="1.6"><path d="M0 1h10M12 1h10M0 3.8h10M12 3.8h10M0 6.6h10M12 6.6h10M0 9.4h10M12 9.4h10M0 12.2h10M12 12.2h10M0 15h10M12 15h10"/></g></svg>
<svg style="left:706px;top:357px" width="11" height="13" viewBox="0 0 11 13"><path d="M0.5 0.5v12l10-6z" fill="#e4e4e4"/></svg>
<svg style="left:765px;top:355px" width="17" height="16" viewBox="0 0 17 16"><path d="M0.8 4.5V0.8H4.5M12.5 0.8h3.7v3.7M16.2 11.5v3.7h-3.7M4.5 15.2H0.8v-3.7" fill="none" stroke="#dadada" stroke-width="1.5"/><circle cx="8.2" cy="7.8" r="3.7" fill="none" stroke="#dadada" stroke-width="1.5"/><path d="M10.9 10.5l2.2 2.2" stroke="#dadada" stroke-width="1.5"/></svg>
<div class="a" style="left:794px;top:356.5px;width:30px;height:13px;border:1.3px solid #dadada;border-radius:1.5px"></div>
<div class="t" style="left:797.3px;top:358.05px;font-size:10.5px;color:#e0e0e0;letter-spacing:-0.253px;">Ratio</div>
<div class="a" style="left:831.5px;top:358px;width:1px;height:10px;background:#2a2a2c"></div>
<svg style="left:840px;top:357px" width="13" height="13" viewBox="0 0 13 13"><path d="M0.8 4.6V0.8h3.8M8.4 0.8h3.8v3.8M12.2 8.4v3.8H8.4M4.6 12.2H0.8V8.4M12 1L7.8 5.2M1 12l4.2-4.2" fill="none" stroke="#dadada" stroke-width="1.5"/></svg>
<div class="panel" style="left:868px;top:34px;width:345px;height:353px;background:#1c1c1e"><div class="hdr"></div><div class="a" style="left:0;right:0;top:319.5px;height:34px;background:#262628"></div></div>
<div class="t" style="left:879.6px;top:49.05px;font-size:12.5px;color:#e6e6e6;font-weight:700;letter-spacing:-0.331px;">Details</div>
<div class="t" style="left:879.3px;top:107.75px;font-size:12.5px;color:#8a8a8c;letter-spacing:-0.983px;">Saved:</div>
<div class="t" style="left:981.8px;top:107.75px;font-size:12.5px;color:#cecece;letter-spacing:0.02px;">E:/Download from net/CapCut Drafts/</div>
<div class="t" style="left:981.8px;top:122.75px;font-size:12.5px;color:#cecece;letter-spacing:-0.468px;">0809</div>
<div class="t" style="left:879.3px;top:153.25px;font-size:12.5px;color:#8a8a8c;letter-spacing:-0.47px;">Ratio:</div>
<div class="t" style="left:981.8px;top:153.25px;font-size:12.5px;color:#cecece;letter-spacing:-0.081px;">Original</div>
<div class="t" style="left:879.3px;top:183.75px;font-size:12.5px;color:#8a8a8c;letter-spacing:-0.253px;">Resolution:</div>
<div class="t" style="left:981.8px;top:183.75px;font-size:12.5px;color:#cecece;letter-spacing:-0.061px;">Adapted</div>
<div class="t" style="left:879.3px;top:214.25px;font-size:12.5px;color:#8a8a8c;letter-spacing:-0.406px;">Color space:</div>
<div class="t" style="left:981.8px;top:214.25px;font-size:12.5px;color:#cecece;letter-spacing:-0.671px;">SDR - Rec.709</div>
<div class="t" style="left:879.3px;top:244.25px;font-size:12.5px;color:#8a8a8c;letter-spacing:-0.359px;">Frame rate:</div>
<div class="t" style="left:981.8px;top:244.25px;font-size:12.5px;color:#cecece;letter-spacing:-0.279px;">30&#46;00fps</div>
<div class="t" style="left:879.3px;top:274.75px;font-size:12.5px;color:#8a8a8c;letter-spacing:0.079px;">Import material:</div>
<div class="t" style="left:981.8px;top:274.75px;font-size:12.5px;color:#cecece;letter-spacing:-0.082px;">Keep in original place</div>
<div class="t" style="left:879.3px;top:321.25px;font-size:12.5px;color:#8a8a8c;letter-spacing:-0.445px;">Proxy:</div>
<div class="t" style="left:981.8px;top:321.25px;font-size:12.5px;color:#cecece;letter-spacing:0.024px;">Turned off</div>
<div class="a" style="left:879px;top:304px;width:321px;height:1px;background:#29292b"></div>
<svg style="left:1186px;top:320px" width="10" height="10" viewBox="0 0 10 10"><circle cx="5" cy="5" r="4.3" fill="none" stroke="#555" stroke-width="1"/><path d="M5 2.6v3.4M5 7v1" stroke="#555" stroke-width="1"/></svg>
<div class="a" style="left:867px;top:348px;width:333px;height:6px;overflow:hidden"><div class="t" style="left:12px;top:3px;font-size:12.5px;color:#77777a">Free layer:</div><div class="t" style="left:115px;top:3px;font-size:12.5px;color:#d2d2d2">Turned on</div><svg style="left:319px;top:3px" width="10" height="10" viewBox="0 0 10 10"><circle cx="5" cy="5" r="4.3" fill="none" stroke="#555" stroke-width="1"/></svg></div>
<div class="btn" style="left:1128px;top:361.5px;width:69px;height:19px;background:#48484b"></div>
<div class="t" style="left:1141.6px;top:364.75px;font-size:12.5px;color:#f0f0f0;font-weight:700;letter-spacing:0.146px;">Modify</div>
<div class="panel" style="left:8px;top:394px;width:1204px;height:250px;background:#1b1b1d"><div class="a" style="left:0;top:0;right:0;height:29.7px;background:#252527"></div><div class="a" style="left:0;top:29.7px;width:106px;bottom:0;background:#1d1d1f"></div><div class="a" style="left:106px;top:30px;width:1px;bottom:0;background:#151517"></div></div>
<svg style="left:17.5px;top:402.5px" width="13" height="14" viewBox="0 0 13 14"><path d="M1 1l10.5 5.2-4.3 1.6 2.6 4.4-2 1.1-2.5-4.4L2.5 12z" fill="none" stroke="#dcdcdc" stroke-width="1.4" stroke-linejoin="round"/></svg>
<svg style="left:42px;top:407px" width="7" height="5" viewBox="0 0 7 5"><path d="M0.6 0.8l2.9 2.8L6.4 0.8" fill="none" stroke="#a0a0a0" stroke-width="1.3"/></svg>
<div class="a" style="left:61.5px;top:401px;width:1px;height:15px;background:#333335;"></div>
<svg style="left:75.5px;top:403.5px" width="12" height="11" viewBox="0 0 12 11"><path d="M3.2 0.9L1 3l2.2 2.1M1 3h6.2a3.6 3.6 0 0 1 0 7.2H1.6" fill="none" stroke="#dcdcdc" stroke-width="1.5"/></svg>
<svg style="left:113.5px;top:403.5px" width="12" height="11" viewBox="0 0 12 11"><path d="M8.8 0.9L11 3 8.8 5.1M11 3H4.8a3.6 3.6 0 0 0 0 7.2h5.6" fill="none" stroke="#353537" stroke-width="1.5"/></svg>
<svg style="left:152px;top:403.5px" width="10" height="12" viewBox="0 0 10 12"><path d="M0.5 0.7h2.6v10.6H0.5M9.5 0.7H6.9v10.6h2.6" fill="none" stroke="#dcdcdc" stroke-width="1.4"/><path d="M3.1 0.7v10.6M6.9 0.7v10.6" stroke="#dcdcdc" stroke-width="1.8"/></svg>
<svg style="left:190px;top:403.5px" width="10" height="12" viewBox="0 0 10 12"><path d="M0.5 0.7h2.6v10.6H0.5" fill="none" stroke="#8a8a8a" stroke-width="1.2" stroke-dasharray="1.2 1"/><path d="M9.5 0.7H6.9v10.6h2.6" fill="none" stroke="#dcdcdc" stroke-width="1.4"/><path d="M6.9 0.7v10.6" stroke="#dcdcdc" stroke-width="1.8"/><path d="M3.1 0.7v10.6" stroke="#8a8a8a" stroke-width="1.4"/></svg>
<svg style="left:228px;top:403.5px" width="10" height="12" viewBox="0 0 10 12"><path d="M0.5 0.7h2.6v10.6H0.5" fill="none" stroke="#dcdcdc" stroke-width="1.4"/><path d="M3.1 0.7v10.6" stroke="#dcdcdc" stroke-width="1.8"/><path d="M9.5 0.7H6.9v10.6h2.6" fill="none" stroke="#8a8a8a" stroke-width="1.2" stroke-dasharray="1.2 1"/><path d="M6.9 0.7v10.6" stroke="#8a8a8a" stroke-width="1.4"/></svg>
<svg style="left:265px;top:403px" width="12" height="13" viewBox="0 0 12 13"><path d="M0.5 2.6h11M4 2.6V0.7h4v1.9M1.8 2.6v9.7h8.4V2.6" fill="none" stroke="#303032" stroke-width="1.3"/></svg>
<svg style="left:858.5px;top:401.5px" width="12" height="16" viewBox="0 0 12 16"><rect x="3.3" y="0.7" width="5.4" height="8.6" rx="2.7" fill="none" stroke="#dcdcdc" stroke-width="1.3"/><path d="M4.5 3.5h3M4.5 5.5h3" stroke="#dcdcdc" stroke-width="0.9"/><path d="M0.8 7.5v1a5.2 4.2 0 0 0 10.4 0v-1M6 12.7v2.6M3 15.3h6" fill="none" stroke="#dcdcdc" stroke-width="1.3"/></svg>
<div class="a" style="left:890px;top:402px;width:1px;height:14px;background:#2e2e30;"></div>
<div class="a" style="left:906.5px;top:397.5px;width:23px;height:22px;background:#161618;border-radius:3px"></div>
<div class="a" style="left:944.5px;top:397.5px;width:23px;height:22px;background:#161618;border-radius:3px"></div>
<div class="a" style="left:982.5px;top:397.5px;width:23px;height:22px;background:#161618;border-radius:3px"></div>
<svg style="left:909.5px;top:405px" width="17.5" height="7.5" viewBox="0 0 18 9" preserveAspectRatio="none"><rect x="0" y="0.5" width="7" height="8" rx="1" fill="#22c3d6"/><path d="M7 4.5h4" stroke="#22c3d6" stroke-width="1.6"/><rect x="10.7" y="1.2" width="6.6" height="6.6" rx="1" fill="none" stroke="#22c3d6" stroke-width="1.5"/></svg>
<svg style="left:947.5px;top:399.5px" width="17.5" height="18" viewBox="0 0 18 18"><rect x="0.5" y="6" width="7.5" height="6" rx="1" fill="#22c3d6"/><rect x="10" y="6" width="7.5" height="6" rx="1" fill="#22c3d6"/><path d="M9 4.5v9" stroke="#22c3d6" stroke-width="1.1"/><path d="M9 0.3v2.4M5 1.3l1 1.9M13 1.3l-1 1.9M9 17.7v-2.4M5 16.7l1-1.9M13 16.7l-1-1.9" stroke="#22c3d6" stroke-width="1.2"/></svg>
<svg style="left:985.5px;top:405px" width="17.5" height="7.5" viewBox="0 0 18 9" preserveAspectRatio="none"><rect x="0" y="0.5" width="18" height="8" rx="1" fill="#22c3d6"/><rect x="4" y="2.8" width="5.5" height="3.4" rx="1.7" fill="none" stroke="#0b3d44" stroke-width="1.1"/><rect x="8.5" y="2.8" width="5.5" height="3.4" rx="1.7" fill="none" stroke="#0b3d44" stroke-width="1.1"/></svg>
<svg style="left:1023.5px;top:402px" width="17" height="14" viewBox="0 0 17 14"><path d="M8.5 0v14" stroke="#dcdcdc" stroke-width="1.5"/><path d="M6.3 3.7H0.7v6.6h5.6M10.7 3.7h5.6v6.6h-5.6" fill="none" stroke="#dcdcdc" stroke-width="1.4"/></svg>
<div class="a" style="left:1052.5px;top:402px;width:1px;height:14px;background:#2e2e30;"></div>
<svg style="left:1064.5px;top:402.5px" width="14" height="14" viewBox="0 0 14 14"><circle cx="6.5" cy="6.5" r="5.5" fill="none" stroke="#dcdcdc" stroke-width="1.3"/><path d="M4 6.5h5" stroke="#dcdcdc" stroke-width="1.3"/><path d="M10 11.2l2.4 0.6-0.5-2" fill="none" stroke="#dcdcdc" stroke-width="1"/></svg>
<div class="a" style="left:1086px;top:408.3px;width:94px;height:1.4px;background:#2c2c2e;"></div>
<div class="a" style="left:1086px;top:408px;width:22px;height:2px;background:#f0f0f0;border-radius:1px"></div>
<div class="a" style="left:1105.5px;top:403.5px;width:7.5px;height:11px;background:#f4f4f4;border-radius:3px"></div>
<svg style="left:1186px;top:402.5px" width="14" height="14" viewBox="0 0 14 14"><circle cx="6.5" cy="6.5" r="5.5" fill="none" stroke="#dcdcdc" stroke-width="1.3"/><path d="M4 6.5h5M6.5 4v5" stroke="#dcdcdc" stroke-width="1.3"/></svg>
<svg style="left:0;top:0" width="1200" height="440" viewBox="0 0 1200 440"><rect x="162.4" y="429" width="1.3" height="9.5" fill="#4a4a4c"/><rect x="183.2" y="429" width="1" height="3" fill="#2e2e30"/><rect x="204" y="429" width="1" height="3" fill="#2e2e30"/><rect x="224.8" y="429" width="1" height="3" fill="#2e2e30"/><rect x="245.5" y="429" width="1" height="3" fill="#2e2e30"/><rect x="266.2" y="429" width="1" height="3" fill="#2e2e30"/><rect x="287" y="429" width="1" height="3" fill="#2e2e30"/><rect x="307.8" y="429" width="1" height="3" fill="#2e2e30"/><rect x="328.5" y="429" width="1" height="3" fill="#2e2e30"/><rect x="349.2" y="429" width="1" height="3" fill="#2e2e30"/><rect x="369.9" y="429" width="1.3" height="9.5" fill="#4a4a4c"/><rect x="390.8" y="429" width="1" height="3" fill="#2e2e30"/><rect x="411.5" y="429" width="1" height="3" fill="#2e2e30"/><rect x="432.2" y="429" width="1" height="3" fill="#2e2e30"/><rect x="453" y="429" width="1" height="3" fill="#2e2e30"/><rect x="473.8" y="429" width="1" height="3" fill="#2e2e30"/><rect x="494.5" y="429" width="1" height="3" fill="#2e2e30"/><rect x="515.2" y="429" width="1" height="3" fill="#2e2e30"/><rect x="536" y="429" width="1" height="3" fill="#2e2e30"/><rect x="556.8" y="429" width="1" height="3" fill="#2e2e30"/><rect x="577.4" y="429" width="1.3" height="9.5" fill="#4a4a4c"/><rect x="598.2" y="429" width="1" height="3" fill="#2e2e30"/><rect x="619" y="429" width="1" height="3" fill="#2e2e30"/><rect x="639.8" y="429" width="1" height="3" fill="#2e2e30"/><rect x="660.5" y="429" width="1" height="3" fill="#2e2e30"/><rect x="681.2" y="429" width="1" height="3" fill="#2e2e30"/><rect x="702" y="429" width="1" height="3" fill="#2e2e30"/><rect x="722.8" y="429" width="1" height="3" fill="#2e2e30"/><rect x="743.5" y="429" width="1" height="3" fill="#2e2e30"/><rect x="764.2" y="429" width="1" height="3" fill="#2e2e30"/><rect x="784.9" y="429" width="1.3" height="9.5" fill="#4a4a4c"/><rect x="805.8" y="429" width="1" height="3" fill="#2e2e30"/><rect x="826.5" y="429" width="1" height="3" fill="#2e2e30"/><rect x="847.2" y="429" width="1" height="3" fill="#2e2e30"/><rect x="868" y="429" width="1" height="3" fill="#2e2e30"/><rect x="888.8" y="429" width="1" height="3" fill="#2e2e30"/><rect x="909.5" y="429" width="1" height="3" fill="#2e2e30"/><rect x="930.2" y="429" width="1" height="3" fill="#2e2e30"/><rect x="951" y="429" width="1" height="3" fill="#2e2e30"/><rect x="971.8" y="429" width="1" height="3" fill="#2e2e30"/><rect x="992.4" y="429" width="1.3" height="9.5" fill="#4a4a4c"/><rect x="1013.2" y="429" width="1" height="3" fill="#2e2e30"/><rect x="1034" y="429" width="1" height="3" fill="#2e2e30"/><rect x="1054.8" y="429" width="1" height="3" fill="#2e2e30"/><rect x="1075.5" y="429" width="1" height="3" fill="#2e2e30"/><rect x="1096.2" y="429" width="1" height="3" fill="#2e2e30"/><rect x="1117" y="429" width="1" height="3" fill="#2e2e30"/><rect x="1137.8" y="429" width="1" height="3" fill="#2e2e30"/><rect x="1158.5" y="429" width="1" height="3" fill="#2e2e30"/><rect x="1179.2" y="429" width="1" height="3" fill="#2e2e30"/></svg>
<div class="t" style="left:166.5px;top:429.05px;font-size:11.5px;color:#5c5c5e;letter-spacing:-0.445px;">00:00</div>
<div class="t" style="left:374px;top:429.05px;font-size:11.5px;color:#5c5c5e;letter-spacing:-0.445px;">01:00</div>
<div class="t" style="left:581.5px;top:429.05px;font-size:11.5px;color:#5c5c5e;letter-spacing:-0.445px;">02:00</div>
<div class="t" style="left:789px;top:429.05px;font-size:11.5px;color:#5c5c5e;letter-spacing:-0.445px;">03:00</div>
<div class="t" style="left:996.5px;top:429.05px;font-size:11.5px;color:#5c5c5e;letter-spacing:-0.445px;">04:00</div>
<i class="c" style="left:165.4px;width:16.3px"></i>
<i class="c" style="left:183.4px;width:4.8px"></i>
<i class="c" style="left:189.3px;width:9.7px"></i>
<i class="c" style="left:200px;width:6.6px"></i>
<i class="c" style="left:207.7px;width:10.8px"></i>
<i class="c" style="left:229px;width:1.4px"></i>
<i class="c" style="left:231px;width:11px"></i>
<i class="c" style="left:242.8px;width:3.9px"></i>
<i class="c" style="left:247.3px;width:13.5px"></i>
<i class="c" style="left:262.5px;width:15.5px"></i>
<i class="c" style="left:278.7px;width:2.6px"></i>
<i class="c" style="left:282px;width:9px"></i>
<i class="c" style="left:292.6px;width:14.7px"></i>
<i class="c" style="left:308.4px;width:11.9px"></i>
<i class="c" style="left:321px;width:7px"></i>
<i class="c" style="left:331px;width:5.6px"></i>
<i class="c" style="left:340px;width:5.3px"></i>
<i class="c" style="left:346.8px;width:9.2px"></i>
<i class="c" style="left:357px;width:10px"></i>
<i class="c" style="left:371.3px;width:9.7px"></i>
<i class="c" style="left:381.5px;width:15.8px"></i>
<i class="c" style="left:403.8px;width:3.2px"></i>
<i class="c" style="left:416.8px;width:6.5px"></i>
<i class="c" style="left:424.3px;width:16.3px"></i>
<i class="c" style="left:441.7px;width:9.7px"></i>
<i class="c" style="left:452.5px;width:3.3px"></i>
<i class="c" style="left:456.8px;width:3.2px"></i>
<i class="c" style="left:462.3px;width:10.7px"></i>
<i class="c" style="left:474px;width:10px"></i>
<i class="c" style="left:485px;width:4.3px"></i>
<i class="c" style="left:490.4px;width:4.4px"></i>
<i class="c" style="left:495.8px;width:5.5px"></i>
<i class="c" style="left:503.4px;width:11.9px"></i>
<i class="c" style="left:516.4px;width:6.6px"></i>
<i class="c" style="left:524px;width:4.3px"></i>
<i class="c" style="left:532.7px;width:7.6px"></i>
<i class="c" style="left:543.5px;width:17.3px"></i>
<i class="c" style="left:564.7px;width:9.1px"></i>
<i class="c" style="left:576px;width:9.8px"></i>
<i class="c" style="left:586.8px;width:7.6px"></i>
<i class="c" style="left:595.5px;width:15.2px"></i>
<i class="c" style="left:611.8px;width:8.6px"></i>
<i class="c" style="left:625.8px;width:3.2px"></i>
<i class="c" style="left:631.3px;width:3.2px"></i>
<i class="c" style="left:635.6px;width:3.2px"></i>
<i class="c" style="left:640.6px;width:5.8px"></i>
<i class="c" style="left:647.5px;width:7.5px"></i>
<i class="c" style="left:656px;width:7.8px"></i>
<i class="c" style="left:664.8px;width:4.4px"></i>
<i class="c" style="left:671px;width:9px"></i>
<i class="c" style="left:685.4px;width:8.6px"></i>
<i class="c" style="left:694.7px;width:8.1px"></i>
<i class="c" style="left:704.3px;width:11.5px"></i>
<i class="c" style="left:717.3px;width:3.4px"></i>
<i class="c" style="left:722.3px;width:15.1px"></i>
<i class="c" style="left:738.5px;width:8.7px"></i>
<i class="c" style="left:748.3px;width:8.7px"></i>
<i class="c" style="left:764px;width:13.5px"></i>
<i class="c" style="left:778.6px;width:15.2px"></i>
<i class="c" style="left:794.8px;width:3.2px"></i>
<i class="c" style="left:802.4px;width:4.4px"></i>
<i class="c" style="left:808.3px;width:13.7px"></i>
<i class="c" style="left:823px;width:4.3px"></i>
<i class="c" style="left:829px;width:7px"></i>
<i class="c" style="left:837px;width:4.4px"></i>
<i class="c" style="left:843px;width:11.4px"></i>
<i class="c" style="left:855.5px;width:11.9px"></i>
<i class="c" style="left:868.5px;width:7.5px"></i>
<i class="c" style="left:880.4px;width:8.6px"></i>
<i class="c" style="left:890.6px;width:2.8px"></i>
<i class="c" style="left:894px;width:2.7px"></i>
<i class="c" style="left:902px;width:3.4px"></i>
<i class="c" style="left:906.4px;width:2.8px"></i>
<i class="c" style="left:910.8px;width:6.5px"></i>
<i class="c" style="left:922.3px;width:3.7px"></i>
<i class="c" style="left:928px;width:3.4px"></i>
<i class="c" style="left:932.4px;width:11.9px"></i>
<i class="c" style="left:945.4px;width:8.6px"></i>
<i class="c" style="left:955px;width:4.5px"></i>
<i class="c" style="left:960.6px;width:7.4px"></i>
<i class="c" style="left:971.4px;width:8.6px"></i>
<i class="c" style="left:981px;width:3.4px"></i>
<i class="c" style="left:985.5px;width:3.3px"></i>
<i class="c" style="left:989.8px;width:7.6px"></i>
<i class="c" style="left:998.5px;width:4.3px"></i>
<i class="c" style="left:1004px;width:4px"></i>
<i class="c" style="left:1009.3px;width:3.3px"></i>
<i class="c" style="left:1013.7px;width:13px"></i>
<i class="c" style="left:1028.4px;width:4.6px"></i>
<i class="c" style="left:1034px;width:14px"></i>
<i class="c" style="left:1053.8px;width:4.2px"></i>
<i class="c" style="left:1059px;width:3.4px"></i>
<i class="c" style="left:1063.5px;width:3.3px"></i>
<i class="c" style="left:1069px;width:10.8px"></i>
<i class="c" style="left:1083.4px;width:3.9px"></i>
<i class="c" style="left:1090.6px;width:10.8px"></i>
<i class="c" style="left:1105.8px;width:10.8px"></i>
<i class="c" style="left:1117.7px;width:5.3px"></i>
<i class="c" style="left:1124.6px;width:2.8px"></i>
<i class="c" style="left:1129.6px;width:2.8px"></i>
<i class="c" style="left:1140.4px;width:2.8px"></i>
<i class="c" style="left:1144px;width:3px"></i>
<i class="c" style="left:1148px;width:10.8px"></i>
<i class="c" style="left:1160px;width:10.8px"></i>
<i class="c" style="left:1178.3px;width:3.3px"></i>
<i class="c" style="left:1182.7px;width:5.3px"></i>
<i class="c" style="left:1190.3px;width:3.2px"></i>
<i class="c" style="left:1194.6px;width:7.4px"></i>
<div class="a" style="left:163px;top:469px;width:72.30000000000001px;height:18.8px;background:#e29c2a;border-radius:3.5px"></div>
<svg style="left:168.3px;top:473px;filter:blur(0.35px)" width="11" height="9" viewBox="0 0 11 9"><path d="M1 2.5C1.5 0.8 3.5 0.3 5 1c1.5-1 4-.500 4.8 1 .800 1.5.500 3.5-.300 5-1 1.4-3 1.5-4.5 1.2C3 8.5 1.2 7.5 0.8 5.8 0.5 4.5 0.6 3.5 1 2.5z" fill="#d9cfae"/><path d="M2.5 2.5l1.5 1.2M6 2.3l2 .800M2 5.5h2.5M6.5 5l2 1M4 7l2-.500" stroke="#77705a" stroke-width="0.9" fill="none"/><circle cx="5" cy="4.2" r="1" fill="#f6f0dc"/></svg>
<div class="a" style="left:237.3px;top:469px;width:30.399999999999977px;height:18.8px;background:#e29c2a;border-radius:3.5px"></div>
<svg style="left:242.6px;top:473px;filter:blur(0.35px)" width="11" height="9" viewBox="0 0 11 9"><path d="M1 2.5C1.5 0.8 3.5 0.3 5 1c1.5-1 4-.500 4.8 1 .800 1.5.500 3.5-.300 5-1 1.4-3 1.5-4.5 1.2C3 8.5 1.2 7.5 0.8 5.8 0.5 4.5 0.6 3.5 1 2.5z" fill="#d9cfae"/><path d="M2.5 2.5l1.5 1.2M6 2.3l2 .800M2 5.5h2.5M6.5 5l2 1M4 7l2-.500" stroke="#77705a" stroke-width="0.9" fill="none"/><circle cx="5" cy="4.2" r="1" fill="#f6f0dc"/></svg>
<div class="a" style="left:286.5px;top:469px;width:77.5px;height:18.8px;background:#e29c2a;border-radius:3.5px"></div>
<svg style="left:291.8px;top:473px;filter:blur(0.35px)" width="11" height="9" viewBox="0 0 11 9"><path d="M1 2.5C1.5 0.8 3.5 0.3 5 1c1.5-1 4-.500 4.8 1 .800 1.5.500 3.5-.300 5-1 1.4-3 1.5-4.5 1.2C3 8.5 1.2 7.5 0.8 5.8 0.5 4.5 0.6 3.5 1 2.5z" fill="#d9cfae"/><path d="M2.5 2.5l1.5 1.2M6 2.3l2 .800M2 5.5h2.5M6.5 5l2 1M4 7l2-.500" stroke="#77705a" stroke-width="0.9" fill="none"/><circle cx="5" cy="4.2" r="1" fill="#f6f0dc"/></svg>
<div class="a" style="left:163px;top:496px;width:245px;height:68px;background:#0b5d61;border-radius:3px;overflow:hidden">
<div class="a" style="left:0;top:52.5px;width:100%;height:15.5px;background:#0d6e72"></div><div class="a" style="left:0;top:57.5px;width:100%;height:9px;background:repeating-linear-gradient(90deg,#0f777b 0 1.3px,#0b6367 1.3px 2.1px);opacity:.55"></div><div class="a" style="left:0;top:60.5px;width:100%;height:0.8px;background:#0b6468;opacity:.7"></div><div class="a" style="left:0;top:63.5px;width:100%;height:0.8px;background:#0b6468;opacity:.7"></div>
</div>
<div class="a" style="left:410px;top:496px;width:791px;height:68px;background:#0b5d61;border-radius:3px 0 0 3px;overflow:hidden">
<div class="a" style="left:0;top:52.5px;width:100%;height:15.5px;background:#0d6e72"></div><div class="a" style="left:0;top:57.5px;width:100%;height:9px;background:repeating-linear-gradient(90deg,#0f777b 0 1.3px,#0b6367 1.3px 2.1px);opacity:.55"></div><div class="a" style="left:0;top:60.5px;width:100%;height:0.8px;background:#0b6468;opacity:.7"></div><div class="a" style="left:0;top:63.5px;width:100%;height:0.8px;background:#0b6468;opacity:.7"></div>
</div>
<div class="a" style="left:163px;top:514px;width:245px;height:34.3px;overflow:hidden"><svg style="left:0;top:0" width="245" height="35" viewBox="0 0 245 35"><svg x="-0.2" y="0" width="47.2" height="35" viewBox="0 0 47.5 35" preserveAspectRatio="none"><rect x="0" y="0" width="47.5" height="35" fill="#f8f9fb"/><rect x="0" y="0" width="47.5" height="1.2" fill="#e4e8ee"/><rect x="16" y="2" width="7" height="1.3" fill="#2f7fd6"/><rect x="7" y="6" width="12" height="22" fill="#f0f2f6"/><rect x="9.5" y="8" width="2" height="2" fill="#7aaee4"/><rect x="21" y="6" width="9" height="5" fill="#f0f2f6"/><rect x="23" y="8" width="2" height="1.5" fill="#7aaee4"/><rect x="23.5" y="16" width="1.8" height="2.5" fill="#4a8fd8"/><rect x="33" y="5" width="9" height="27" fill="#eff1f5"/><rect x="35" y="8" width="4" height="0.9" fill="#c0c7d2"/><rect x="36" y="11" width="7" height="0.9" fill="#c0c7d2"/><rect x="35" y="14" width="6" height="0.9" fill="#c0c7d2"/><rect x="36" y="17.5" width="5" height="0.9" fill="#c0c7d2"/><rect x="35" y="21" width="4" height="0.9" fill="#c0c7d2"/><rect x="36" y="24.5" width="7" height="0.9" fill="#c0c7d2"/><rect x="35" y="28" width="6" height="0.9" fill="#c0c7d2"/><rect x="44" y="3" width="3.5" height="30" fill="#f1f3f6"/><rect x="0" y="3" width="3" height="30" fill="#f3f4f7"/><rect x="31.5" y="3" width="0.5" height="30" fill="#e2e5ea"/></svg><svg x="47" y="0" width="47.5" height="35" viewBox="0 0 47.5 35" preserveAspectRatio="none"><rect x="0" y="0" width="47.5" height="35" fill="#f8f9fb"/><rect x="0" y="0" width="47.5" height="1.2" fill="#e4e8ee"/><rect x="16" y="2" width="7" height="1.3" fill="#2f7fd6"/><rect x="7" y="6" width="12" height="22" fill="#f0f2f6"/><rect x="9.5" y="8" width="2" height="2" fill="#7aaee4"/><rect x="21" y="6" width="9" height="5" fill="#f0f2f6"/><rect x="23" y="8" width="2" height="1.5" fill="#7aaee4"/><rect x="23.5" y="16" width="1.8" height="2.5" fill="#4a8fd8"/><rect x="33" y="5" width="9" height="27" fill="#eff1f5"/><rect x="35" y="8" width="4" height="0.9" fill="#c0c7d2"/><rect x="36" y="11" width="7" height="0.9" fill="#c0c7d2"/><rect x="35" y="14" width="6" height="0.9" fill="#c0c7d2"/><rect x="36" y="17.5" width="5" height="0.9" fill="#c0c7d2"/><rect x="35" y="21" width="4" height="0.9" fill="#c0c7d2"/><rect x="36" y="24.5" width="7" height="0.9" fill="#c0c7d2"/><rect x="35" y="28" width="6" height="0.9" fill="#c0c7d2"/><rect x="44" y="3" width="3.5" height="30" fill="#f1f3f6"/><rect x="0" y="3" width="3" height="30" fill="#f3f4f7"/><rect x="31.5" y="3" width="0.5" height="30" fill="#e2e5ea"/></svg><svg x="94.5" y="0" width="47.2" height="35" viewBox="0 0 47.5 35" preserveAspectRatio="none"><rect x="0" y="0" width="47.5" height="35" fill="#f8f9fb"/><rect x="0" y="0" width="47.5" height="1.2" fill="#e4e8ee"/><rect x="16" y="2" width="7" height="1.3" fill="#2f7fd6"/><rect x="7" y="6" width="12" height="22" fill="#f0f2f6"/><rect x="9.5" y="8" width="2" height="2" fill="#7aaee4"/><rect x="21" y="6" width="9" height="5" fill="#f0f2f6"/><rect x="23" y="8" width="2" height="1.5" fill="#7aaee4"/><rect x="23.5" y="16" width="1.8" height="2.5" fill="#4a8fd8"/><rect x="33" y="5" width="9" height="27" fill="#eff1f5"/><rect x="35" y="8" width="4" height="0.9" fill="#c0c7d2"/><rect x="36" y="11" width="7" height="0.9" fill="#c0c7d2"/><rect x="35" y="14" width="6" height="0.9" fill="#c0c7d2"/><rect x="36" y="17.5" width="5" height="0.9" fill="#c0c7d2"/><rect x="35" y="21" width="4" height="0.9" fill="#c0c7d2"/><rect x="36" y="24.5" width="7" height="0.9" fill="#c0c7d2"/><rect x="35" y="28" width="6" height="0.9" fill="#c0c7d2"/><rect x="44" y="3" width="3.5" height="30" fill="#f1f3f6"/><rect x="0" y="3" width="3" height="30" fill="#f3f4f7"/><rect x="31.5" y="3" width="0.5" height="30" fill="#e2e5ea"/></svg><svg x="141.7" y="0" width="46.6" height="35" viewBox="0 0 47.5 35" preserveAspectRatio="none"><rect x="0" y="0" width="47.5" height="35" fill="#f8f9fb"/><rect x="0" y="0" width="47.5" height="1.2" fill="#e4e8ee"/><rect x="16" y="2" width="7" height="1.3" fill="#2f7fd6"/><rect x="7" y="6" width="12" height="22" fill="#f0f2f6"/><rect x="9.5" y="8" width="2" height="2" fill="#7aaee4"/><rect x="21" y="6" width="9" height="5" fill="#f0f2f6"/><rect x="23" y="8" width="2" height="1.5" fill="#7aaee4"/><rect x="23.5" y="16" width="1.8" height="2.5" fill="#4a8fd8"/><rect x="33" y="5" width="9" height="27" fill="#eff1f5"/><rect x="35" y="8" width="4" height="0.9" fill="#c0c7d2"/><rect x="36" y="11" width="7" height="0.9" fill="#c0c7d2"/><rect x="35" y="14" width="6" height="0.9" fill="#c0c7d2"/><rect x="36" y="17.5" width="5" height="0.9" fill="#c0c7d2"/><rect x="35" y="21" width="4" height="0.9" fill="#c0c7d2"/><rect x="36" y="24.5" width="7" height="0.9" fill="#c0c7d2"/><rect x="35" y="28" width="6" height="0.9" fill="#c0c7d2"/><rect x="44" y="3" width="3.5" height="30" fill="#f1f3f6"/><rect x="0" y="3" width="3" height="30" fill="#f3f4f7"/><rect x="31.5" y="3" width="0.5" height="30" fill="#e2e5ea"/></svg><svg x="188.3" y="0" width="48" height="35" viewBox="0 0 47.5 35" preserveAspectRatio="none"><rect x="0" y="0" width="47.5" height="35" fill="#f8f9fb"/><rect x="0" y="0" width="47.5" height="1.2" fill="#e4e8ee"/><rect x="16" y="2" width="7" height="1.3" fill="#2f7fd6"/><rect x="7" y="6" width="12" height="22" fill="#f0f2f6"/><rect x="9.5" y="8" width="2" height="2" fill="#7aaee4"/><rect x="21" y="6" width="9" height="5" fill="#f0f2f6"/><rect x="23" y="8" width="2" height="1.5" fill="#7aaee4"/><rect x="23.5" y="16" width="1.8" height="2.5" fill="#4a8fd8"/><rect x="33" y="5" width="9" height="27" fill="#eff1f5"/><rect x="35" y="8" width="4" height="0.9" fill="#c0c7d2"/><rect x="36" y="11" width="7" height="0.9" fill="#c0c7d2"/><rect x="35" y="14" width="6" height="0.9" fill="#c0c7d2"/><rect x="36" y="17.5" width="5" height="0.9" fill="#c0c7d2"/><rect x="35" y="21" width="4" height="0.9" fill="#c0c7d2"/><rect x="36" y="24.5" width="7" height="0.9" fill="#c0c7d2"/><rect x="35" y="28" width="6" height="0.9" fill="#c0c7d2"/><rect x="44" y="3" width="3.5" height="30" fill="#f1f3f6"/><rect x="0" y="3" width="3" height="30" fill="#f3f4f7"/><rect x="31.5" y="3" width="0.5" height="30" fill="#e2e5ea"/></svg><svg x="236.3" y="0" width="47.3" height="35" viewBox="0 0 47.5 35" preserveAspectRatio="none"><rect x="0" y="0" width="47.5" height="35" fill="#f6f6f8"/><rect x="0" y="0" width="47.5" height="5" fill="#fdfdfd"/><rect x="0" y="6" width="47.5" height="6" fill="#8c8c8c"/><rect x="0" y="12" width="47.5" height="5" fill="#e9eaf0"/><rect x="3" y="13.5" width="8" height="2.5" fill="#2a3aa8"/><rect x="0" y="18" width="47.5" height="2.5" fill="#5a5fb0"/><rect x="0" y="21" width="47.5" height="5" fill="#9a9a9a"/><rect x="0" y="26" width="47.5" height="9" fill="#f4f4f6"/><rect x="4" y="22.5" width="30" height="1" fill="#ddd"/></svg></svg></div>
<div class="a" style="left:410px;top:514px;width:791px;height:34.3px;overflow:hidden"><svg style="left:0;top:0" width="791" height="35" viewBox="0 0 791 35"><svg x="-22.6" y="0" width="47.3" height="35" viewBox="0 0 47.5 35" preserveAspectRatio="none"><rect x="0" y="0" width="47.5" height="35" fill="#f6f6f8"/><rect x="0" y="0" width="47.5" height="5" fill="#fdfdfd"/><rect x="0" y="6" width="47.5" height="6" fill="#8c8c8c"/><rect x="0" y="12" width="47.5" height="5" fill="#e9eaf0"/><rect x="3" y="13.5" width="8" height="2.5" fill="#2a3aa8"/><rect x="0" y="18" width="47.5" height="2.5" fill="#5a5fb0"/><rect x="0" y="21" width="47.5" height="5" fill="#9a9a9a"/><rect x="0" y="26" width="47.5" height="9" fill="#f4f4f6"/><rect x="4" y="22.5" width="30" height="1" fill="#ddd"/></svg><svg x="24.7" y="0" width="47.3" height="35" viewBox="0 0 47.5 35" preserveAspectRatio="none"><rect x="0" y="0" width="47.5" height="35" fill="#fbfbfc"/><rect x="0" y="0" width="47.5" height="1.5" fill="#f0f0f0"/><rect x="5" y="3" width="3.5" height="1.5" fill="#2f5fb5"/><rect x="20" y="3" width="3" height="2" fill="#e8b030"/><rect x="3" y="7" width="12" height="16" fill="#eef0f4"/><rect x="19" y="7" width="9" height="16" fill="#f0f1f4"/><rect x="21" y="9" width="3" height="4" fill="#d0d4dc"/><rect x="22" y="14" width="4" height="3" fill="#e8a040" opacity="0.8"/><rect x="6" y="10" width="5" height="0.8" fill="#b0b6c0"/><rect x="6" y="14" width="6" height="0.8" fill="#b0b6c0"/><rect x="6" y="18" width="4" height="0.8" fill="#b0b6c0"/><rect x="0" y="24.5" width="47.5" height="6.5" fill="#8f8f8f"/><rect x="0" y="31" width="47.5" height="4" fill="#fafafa"/><rect x="12" y="32.5" width="31" height="1" fill="#5358c8"/></svg><svg x="72" y="0" width="48" height="35" viewBox="0 0 47.5 35" preserveAspectRatio="none"><rect x="0" y="0" width="47.5" height="35" fill="#fbfbfc"/><rect x="0" y="0" width="47.5" height="1.5" fill="#f0f0f0"/><rect x="5" y="3" width="3.5" height="1.5" fill="#2f5fb5"/><rect x="20" y="3" width="3" height="2" fill="#e8b030"/><rect x="3" y="7" width="12" height="16" fill="#eef0f4"/><rect x="19" y="7" width="9" height="16" fill="#f0f1f4"/><rect x="21" y="9" width="3" height="4" fill="#d0d4dc"/><rect x="22" y="14" width="4" height="3" fill="#e8a040" opacity="0.8"/><rect x="6" y="10" width="5" height="0.8" fill="#b0b6c0"/><rect x="6" y="14" width="6" height="0.8" fill="#b0b6c0"/><rect x="6" y="18" width="4" height="0.8" fill="#b0b6c0"/><rect x="0" y="24.5" width="47.5" height="6.5" fill="#8f8f8f"/><rect x="0" y="31" width="47.5" height="4" fill="#fafafa"/><rect x="12" y="32.5" width="31" height="1" fill="#5358c8"/></svg><svg x="120" y="0" width="53" height="35" viewBox="0 0 47.5 35" preserveAspectRatio="none"><rect x="0" y="0" width="47.5" height="35" fill="#fbfbfc"/><rect x="0" y="0" width="47.5" height="1.5" fill="#f0f0f0"/><rect x="5" y="3" width="3.5" height="1.5" fill="#2f5fb5"/><rect x="20" y="3" width="3" height="2" fill="#e8b030"/><rect x="3" y="7" width="12" height="16" fill="#eef0f4"/><rect x="19" y="7" width="9" height="16" fill="#f0f1f4"/><rect x="21" y="9" width="3" height="4" fill="#d0d4dc"/><rect x="22" y="14" width="4" height="3" fill="#e8a040" opacity="0.8"/><rect x="6" y="10" width="5" height="0.8" fill="#b0b6c0"/><rect x="6" y="14" width="6" height="0.8" fill="#b0b6c0"/><rect x="6" y="18" width="4" height="0.8" fill="#b0b6c0"/><rect x="0" y="24.5" width="47.5" height="6.5" fill="#8f8f8f"/><rect x="0" y="31" width="47.5" height="4" fill="#fafafa"/><rect x="12" y="32.5" width="31" height="1" fill="#5358c8"/></svg><svg x="173" y="0" width="45" height="35" viewBox="0 0 47.5 35" preserveAspectRatio="none"><rect x="0" y="0" width="47.5" height="35" fill="#f8f8f3"/><rect x="0" y="0" width="47.5" height="1.6" fill="#d9e3ea"/><rect x="0" y="0" width="2.6" height="35" fill="#dededa"/><rect x="2.6" y="0" width="0.6" height="35" fill="#b9d4b9"/><rect x="43" y="2" width="4.5" height="33" fill="#f0f0ec"/><rect x="44" y="0" width="3.5" height="2.5" fill="#3f77b8"/><rect x="0" y="19" width="2.6" height="5" fill="#909090"/><rect x="12" y="8" width="2.5" height="1.2" fill="#7aa0c0" opacity="0.7"/><rect x="16" y="8" width="17" height="1" fill="#c4c4c0"/><rect x="12" y="17" width="2.5" height="1.2" fill="#7aa0c0" opacity="0.7"/><rect x="16" y="17" width="16" height="1" fill="#c4c4c0"/><rect x="14" y="12.5" width="10" height="0.8" fill="#d4d4d0"/><rect x="8" y="3.5" width="9" height="0.9" fill="#b8d0a8"/><rect x="22" y="30.5" width="6" height="0.8" fill="#c8dcc0"/></svg><svg x="218" y="0" width="46" height="35" viewBox="0 0 47.5 35" preserveAspectRatio="none"><rect x="0" y="0" width="47.5" height="35" fill="#f8f8f3"/><rect x="0" y="0" width="47.5" height="1.6" fill="#d9e3ea"/><rect x="0" y="0" width="2.6" height="35" fill="#dededa"/><rect x="2.6" y="0" width="0.6" height="35" fill="#b9d4b9"/><rect x="43" y="2" width="4.5" height="33" fill="#f0f0ec"/><rect x="44" y="0" width="3.5" height="2.5" fill="#3f77b8"/><rect x="0" y="19" width="2.6" height="5" fill="#909090"/><rect x="12" y="8" width="2.5" height="1.2" fill="#7aa0c0" opacity="0.7"/><rect x="16" y="8" width="17" height="1" fill="#c4c4c0"/><rect x="12" y="17" width="2.5" height="1.2" fill="#7aa0c0" opacity="0.7"/><rect x="16" y="17" width="16" height="1" fill="#c4c4c0"/><rect x="14" y="12.5" width="10" height="0.8" fill="#d4d4d0"/><rect x="8" y="3.5" width="9" height="0.9" fill="#b8d0a8"/><rect x="22" y="30.5" width="6" height="0.8" fill="#c8dcc0"/></svg><svg x="264" y="0" width="52" height="35" viewBox="0 0 47.5 35" preserveAspectRatio="none"><rect x="0" y="0" width="47.5" height="35" fill="#f8f8f3"/><rect x="0" y="0" width="47.5" height="1.6" fill="#d9e3ea"/><rect x="0" y="0" width="2.6" height="35" fill="#dededa"/><rect x="2.6" y="0" width="0.6" height="35" fill="#b9d4b9"/><rect x="43" y="2" width="4.5" height="33" fill="#f0f0ec"/><rect x="44" y="0" width="3.5" height="2.5" fill="#3f77b8"/><rect x="0" y="19" width="2.6" height="5" fill="#909090"/><rect x="0" y="0" width="5" height="9" fill="#b23a34"/><rect x="0" y="9" width="5" height="26" fill="#efefef"/><rect x="1" y="13" width="3" height="1" fill="#aaa"/><rect x="1" y="20" width="3" height="1.5" fill="#777"/><rect x="1" y="27" width="3" height="1" fill="#aaa"/><rect x="12" y="8" width="2.5" height="1.2" fill="#7aa0c0" opacity="0.7"/><rect x="16" y="8" width="17" height="1" fill="#c4c4c0"/><rect x="12" y="17" width="2.5" height="1.2" fill="#7aa0c0" opacity="0.7"/><rect x="16" y="17" width="16" height="1" fill="#c4c4c0"/><rect x="14" y="12.5" width="10" height="0.8" fill="#d4d4d0"/><rect x="8" y="3.5" width="9" height="0.9" fill="#b8d0a8"/><rect x="22" y="30.5" width="6" height="0.8" fill="#c8dcc0"/></svg><svg x="316" y="0" width="47.7" height="35" viewBox="0 0 47.5 35" preserveAspectRatio="none"><rect x="0" y="0" width="47.5" height="35" fill="#f8f8f3"/><rect x="0" y="0" width="47.5" height="1.6" fill="#d9e3ea"/><rect x="0" y="0" width="2.6" height="35" fill="#dededa"/><rect x="2.6" y="0" width="0.6" height="35" fill="#b9d4b9"/><rect x="43" y="2" width="4.5" height="33" fill="#f0f0ec"/><rect x="44" y="0" width="3.5" height="2.5" fill="#3f77b8"/><rect x="0" y="19" width="2.6" height="5" fill="#909090"/><rect x="12" y="8" width="2.5" height="1.2" fill="#7aa0c0" opacity="0.7"/><rect x="16" y="8" width="17" height="1" fill="#c4c4c0"/><rect x="12" y="17" width="2.5" height="1.2" fill="#7aa0c0" opacity="0.7"/><rect x="16" y="17" width="16" height="1" fill="#c4c4c0"/><rect x="14" y="12.5" width="10" height="0.8" fill="#d4d4d0"/><rect x="8" y="3.5" width="9" height="0.9" fill="#b8d0a8"/><rect x="22" y="30.5" width="6" height="0.8" fill="#c8dcc0"/></svg><svg x="363.7" y="0" width="47.7" height="35" viewBox="0 0 47.5 35" preserveAspectRatio="none"><rect x="0" y="0" width="47.5" height="35" fill="#f8f8f3"/><rect x="0" y="0" width="47.5" height="1.6" fill="#d9e3ea"/><rect x="0" y="0" width="2.6" height="35" fill="#dededa"/><rect x="2.6" y="0" width="0.6" height="35" fill="#b9d4b9"/><rect x="43" y="2" width="4.5" height="33" fill="#f0f0ec"/><rect x="44" y="0" width="3.5" height="2.5" fill="#3f77b8"/><rect x="0" y="19" width="2.6" height="5" fill="#909090"/><rect x="10" y="7" width="2.5" height="1.2" fill="#7aa0c0" opacity="0.7"/><rect x="14" y="7" width="16" height="1" fill="#c4c4c0"/><rect x="8" y="14.5" width="26" height="5" fill="#e9eaf0"/><rect x="9" y="15.5" width="18" height="1" fill="#9a9fb4"/><rect x="9" y="17.6" width="14" height="0.8" fill="#b4b8c8"/><rect x="14" y="23" width="12" height="0.8" fill="#d0d0cc"/><rect x="8" y="3.5" width="9" height="0.9" fill="#b8d0a8"/></svg><svg x="411.4" y="0" width="47.7" height="35" viewBox="0 0 47.5 35" preserveAspectRatio="none"><rect x="0" y="0" width="47.5" height="35" fill="#f8f8f3"/><rect x="0" y="0" width="47.5" height="1.6" fill="#d9e3ea"/><rect x="0" y="0" width="2.6" height="35" fill="#dededa"/><rect x="2.6" y="0" width="0.6" height="35" fill="#b9d4b9"/><rect x="43" y="2" width="4.5" height="33" fill="#f0f0ec"/><rect x="44" y="0" width="3.5" height="2.5" fill="#3f77b8"/><rect x="0" y="19" width="2.6" height="5" fill="#909090"/><rect x="12" y="8" width="2.5" height="1.2" fill="#7aa0c0" opacity="0.7"/><rect x="16" y="8" width="17" height="1" fill="#c4c4c0"/><rect x="12" y="17" width="2.5" height="1.2" fill="#7aa0c0" opacity="0.7"/><rect x="16" y="17" width="16" height="1" fill="#c4c4c0"/><rect x="14" y="12.5" width="10" height="0.8" fill="#d4d4d0"/><rect x="8" y="3.5" width="9" height="0.9" fill="#b8d0a8"/><rect x="22" y="30.5" width="6" height="0.8" fill="#c8dcc0"/></svg><svg x="459.1" y="0" width="47.7" height="35" viewBox="0 0 47.5 35" preserveAspectRatio="none"><rect x="0" y="0" width="47.5" height="35" fill="#f8f8f3"/><rect x="0" y="0" width="47.5" height="1.6" fill="#d9e3ea"/><rect x="0" y="0" width="2.6" height="35" fill="#dededa"/><rect x="2.6" y="0" width="0.6" height="35" fill="#b9d4b9"/><rect x="43" y="2" width="4.5" height="33" fill="#f0f0ec"/><rect x="44" y="0" width="3.5" height="2.5" fill="#3f77b8"/><rect x="0" y="19" width="2.6" height="5" fill="#909090"/><rect x="12" y="8" width="2.5" height="1.2" fill="#7aa0c0" opacity="0.7"/><rect x="16" y="8" width="17" height="1" fill="#c4c4c0"/><rect x="12" y="17" width="2.5" height="1.2" fill="#7aa0c0" opacity="0.7"/><rect x="16" y="17" width="16" height="1" fill="#c4c4c0"/><rect x="14" y="12.5" width="10" height="0.8" fill="#d4d4d0"/><rect x="8" y="3.5" width="9" height="0.9" fill="#b8d0a8"/><rect x="22" y="30.5" width="6" height="0.8" fill="#c8dcc0"/></svg><svg x="506.8" y="0" width="47.7" height="35" viewBox="0 0 47.5 35" preserveAspectRatio="none"><rect x="0" y="0" width="47.5" height="35" fill="#f8f8f3"/><rect x="0" y="0" width="47.5" height="1.6" fill="#d9e3ea"/><rect x="0" y="0" width="2.6" height="35" fill="#dededa"/><rect x="2.6" y="0" width="0.6" height="35" fill="#b9d4b9"/><rect x="43" y="2" width="4.5" height="33" fill="#f0f0ec"/><rect x="44" y="0" width="3.5" height="2.5" fill="#3f77b8"/><rect x="0" y="19" width="2.6" height="5" fill="#909090"/><rect x="10" y="7" width="2.5" height="1.2" fill="#7aa0c0" opacity="0.7"/><rect x="14" y="7" width="16" height="1" fill="#c4c4c0"/><rect x="8" y="14.5" width="26" height="5" fill="#e9eaf0"/><rect x="9" y="15.5" width="18" height="1" fill="#9a9fb4"/><rect x="9" y="17.6" width="14" height="0.8" fill="#b4b8c8"/><rect x="14" y="23" width="12" height="0.8" fill="#d0d0cc"/><rect x="8" y="3.5" width="9" height="0.9" fill="#b8d0a8"/></svg><svg x="554.5" y="0" width="47.7" height="35" viewBox="0 0 47.5 35" preserveAspectRatio="none"><rect x="0" y="0" width="47.5" height="35" fill="#f8f8f3"/><rect x="0" y="0" width="47.5" height="1.6" fill="#d9e3ea"/><rect x="0" y="0" width="2.6" height="35" fill="#dededa"/><rect x="2.6" y="0" width="0.6" height="35" fill="#b9d4b9"/><rect x="43" y="2" width="4.5" height="33" fill="#f0f0ec"/><rect x="44" y="0" width="3.5" height="2.5" fill="#3f77b8"/><rect x="0" y="19" width="2.6" height="5" fill="#909090"/><rect x="12" y="8" width="2.5" height="1.2" fill="#7aa0c0" opacity="0.7"/><rect x="16" y="8" width="17" height="1" fill="#c4c4c0"/><rect x="12" y="17" width="2.5" height="1.2" fill="#7aa0c0" opacity="0.7"/><rect x="16" y="17" width="16" height="1" fill="#c4c4c0"/><rect x="14" y="12.5" width="10" height="0.8" fill="#d4d4d0"/><rect x="8" y="3.5" width="9" height="0.9" fill="#b8d0a8"/><rect x="22" y="30.5" width="6" height="0.8" fill="#c8dcc0"/></svg><svg x="602.2" y="0" width="47.7" height="35" viewBox="0 0 47.5 35" preserveAspectRatio="none"><rect x="0" y="0" width="47.5" height="35" fill="#f8f8f3"/><rect x="0" y="0" width="47.5" height="1.6" fill="#d9e3ea"/><rect x="0" y="0" width="2.6" height="35" fill="#dededa"/><rect x="2.6" y="0" width="0.6" height="35" fill="#b9d4b9"/><rect x="43" y="2" width="4.5" height="33" fill="#f0f0ec"/><rect x="44" y="0" width="3.5" height="2.5" fill="#3f77b8"/><rect x="0" y="19" width="2.6" height="5" fill="#909090"/><rect x="12" y="8" width="2.5" height="1.2" fill="#7aa0c0" opacity="0.7"/><rect x="16" y="8" width="17" height="1" fill="#c4c4c0"/><rect x="12" y="17" width="2.5" height="1.2" fill="#7aa0c0" opacity="0.7"/><rect x="16" y="17" width="16" height="1" fill="#c4c4c0"/><rect x="14" y="12.5" width="10" height="0.8" fill="#d4d4d0"/><rect x="8" y="3.5" width="9" height="0.9" fill="#b8d0a8"/><rect x="22" y="30.5" width="6" height="0.8" fill="#c8dcc0"/></svg><svg x="649.9" y="0" width="47.7" height="35" viewBox="0 0 47.5 35" preserveAspectRatio="none"><rect x="0" y="0" width="47.5" height="35" fill="#f8f8f3"/><rect x="0" y="0" width="47.5" height="1.6" fill="#d9e3ea"/><rect x="0" y="0" width="2.6" height="35" fill="#dededa"/><rect x="2.6" y="0" width="0.6" height="35" fill="#b9d4b9"/><rect x="43" y="2" width="4.5" height="33" fill="#f0f0ec"/><rect x="44" y="0" width="3.5" height="2.5" fill="#3f77b8"/><rect x="0" y="19" width="2.6" height="5" fill="#909090"/><rect x="10" y="7" width="2.5" height="1.2" fill="#7aa0c0" opacity="0.7"/><rect x="14" y="7" width="16" height="1" fill="#c4c4c0"/><rect x="8" y="14.5" width="26" height="5" fill="#e9eaf0"/><rect x="9" y="15.5" width="18" height="1" fill="#9a9fb4"/><rect x="9" y="17.6" width="14" height="0.8" fill="#b4b8c8"/><rect x="14" y="23" width="12" height="0.8" fill="#d0d0cc"/><rect x="8" y="3.5" width="9" height="0.9" fill="#b8d0a8"/></svg><svg x="697.6" y="0" width="47.7" height="35" viewBox="0 0 47.5 35" preserveAspectRatio="none"><rect x="0" y="0" width="47.5" height="35" fill="#f8f8f3"/><rect x="0" y="0" width="47.5" height="1.6" fill="#d9e3ea"/><rect x="0" y="0" width="2.6" height="35" fill="#dededa"/><rect x="2.6" y="0" width="0.6" height="35" fill="#b9d4b9"/><rect x="43" y="2" width="4.5" height="33" fill="#f0f0ec"/><rect x="44" y="0" width="3.5" height="2.5" fill="#3f77b8"/><rect x="0" y="19" width="2.6" height="5" fill="#909090"/><rect x="12" y="8" width="2.5" height="1.2" fill="#7aa0c0" opacity="0.7"/><rect x="16" y="8" width="17" height="1" fill="#c4c4c0"/><rect x="12" y="17" width="2.5" height="1.2" fill="#7aa0c0" opacity="0.7"/><rect x="16" y="17" width="16" height="1" fill="#c4c4c0"/><rect x="14" y="12.5" width="10" height="0.8" fill="#d4d4d0"/><rect x="8" y="3.5" width="9" height="0.9" fill="#b8d0a8"/><rect x="22" y="30.5" width="6" height="0.8" fill="#c8dcc0"/></svg><svg x="745.3" y="0" width="47.7" height="35" viewBox="0 0 47.5 35" preserveAspectRatio="none"><rect x="0" y="0" width="47.5" height="35" fill="#f8f8f3"/><rect x="0" y="0" width="47.5" height="1.6" fill="#d9e3ea"/><rect x="0" y="0" width="2.6" height="35" fill="#dededa"/><rect x="2.6" y="0" width="0.6" height="35" fill="#b9d4b9"/><rect x="43" y="2" width="4.5" height="33" fill="#f0f0ec"/><rect x="44" y="0" width="3.5" height="2.5" fill="#3f77b8"/><rect x="0" y="19" width="2.6" height="5" fill="#909090"/><rect x="12" y="8" width="2.5" height="1.2" fill="#7aa0c0" opacity="0.7"/><rect x="16" y="8" width="17" height="1" fill="#c4c4c0"/><rect x="12" y="17" width="2.5" height="1.2" fill="#7aa0c0" opacity="0.7"/><rect x="16" y="17" width="16" height="1" fill="#c4c4c0"/><rect x="14" y="12.5" width="10" height="0.8" fill="#d4d4d0"/><rect x="8" y="3.5" width="9" height="0.9" fill="#b8d0a8"/><rect x="22" y="30.5" width="6" height="0.8" fill="#c8dcc0"/></svg></svg></div>
<svg style="left:0;top:548.5px" width="1200" height="16" viewBox="0 0 1200 16"><rect x="164" y="2.2" width="32.4" height="1.8" fill="#a07a3a"/><rect x="164" y="4" width="32.4" height="1.6" fill="#3a9a8a" opacity=".55"/><rect x="197.8" y="2.2" width="43.9" height="1.8" fill="#a07a3a"/><rect x="197.8" y="4" width="43.9" height="1.6" fill="#3a9a8a" opacity=".55"/><rect x="243.2" y="2.2" width="11" height="1.8" fill="#a07a3a"/><rect x="243.2" y="4" width="11" height="1.6" fill="#3a9a8a" opacity=".55"/><rect x="255.8" y="2" width="3" height="7" fill="#0b5c60" opacity=".8"/><rect x="289.7" y="2.2" width="26.9" height="1.8" fill="#a07a3a"/><rect x="289.7" y="4" width="26.9" height="1.6" fill="#3a9a8a" opacity=".55"/><rect x="317.6" y="2.2" width="30.7" height="1.8" fill="#a07a3a"/><rect x="317.6" y="4" width="30.7" height="1.6" fill="#3a9a8a" opacity=".55"/><rect x="348.9" y="2" width="3" height="7" fill="#0b5c60" opacity=".8"/><rect x="370.3" y="2.2" width="15.7" height="1.8" fill="#a07a3a"/><rect x="370.3" y="4" width="15.7" height="1.6" fill="#3a9a8a" opacity=".55"/><rect x="386.6" y="2.2" width="20.4" height="1.8" fill="#a07a3a"/><rect x="386.6" y="4" width="20.4" height="1.6" fill="#3a9a8a" opacity=".55"/><rect x="419.3" y="2.2" width="41.4" height="1.8" fill="#a07a3a"/><rect x="419.3" y="4" width="41.4" height="1.6" fill="#3a9a8a" opacity=".55"/><rect x="461.3" y="2.2" width="45.4" height="1.8" fill="#a07a3a"/><rect x="461.3" y="4" width="45.4" height="1.6" fill="#3a9a8a" opacity=".55"/><rect x="507.4" y="2.2" width="44.6" height="1.8" fill="#a07a3a"/><rect x="507.4" y="4" width="44.6" height="1.6" fill="#3a9a8a" opacity=".55"/><rect x="553.2" y="2" width="3" height="7" fill="#0b5c60" opacity=".8"/><rect x="571.8" y="2.2" width="44.8" height="1.8" fill="#a07a3a"/><rect x="571.8" y="4" width="44.8" height="1.6" fill="#3a9a8a" opacity=".55"/><rect x="617.4" y="2.2" width="23" height="1.8" fill="#a07a3a"/><rect x="617.4" y="4" width="23" height="1.6" fill="#3a9a8a" opacity=".55"/><rect x="641" y="2.2" width="12.3" height="1.8" fill="#a07a3a"/><rect x="641" y="4" width="12.3" height="1.6" fill="#3a9a8a" opacity=".55"/><rect x="654.4" y="2.2" width="10.1" height="1.8" fill="#a07a3a"/><rect x="654.4" y="4" width="10.1" height="1.6" fill="#3a9a8a" opacity=".55"/><rect x="665.4" y="2.2" width="21.2" height="1.8" fill="#a07a3a"/><rect x="665.4" y="4" width="21.2" height="1.6" fill="#3a9a8a" opacity=".55"/><rect x="687.5" y="2.2" width="21.4" height="1.8" fill="#a07a3a"/><rect x="687.5" y="4" width="21.4" height="1.6" fill="#3a9a8a" opacity=".55"/><rect x="710.1" y="2" width="3" height="7" fill="#0b5c60" opacity=".8"/><rect x="722.6" y="2.2" width="37" height="1.8" fill="#a07a3a"/><rect x="722.6" y="4" width="37" height="1.6" fill="#3a9a8a" opacity=".55"/><rect x="760" y="2.2" width="38.4" height="1.8" fill="#a07a3a"/><rect x="760" y="4" width="38.4" height="1.6" fill="#3a9a8a" opacity=".55"/><rect x="799.5" y="2.2" width="10.3" height="1.8" fill="#a07a3a"/><rect x="799.5" y="4" width="10.3" height="1.6" fill="#3a9a8a" opacity=".55"/><rect x="810.4" y="2.2" width="44.4" height="1.8" fill="#a07a3a"/><rect x="810.4" y="4" width="44.4" height="1.6" fill="#3a9a8a" opacity=".55"/><rect x="856.1" y="2" width="3" height="7" fill="#0b5c60" opacity=".8"/><rect x="900.4" y="2.2" width="22.8" height="1.8" fill="#a07a3a"/><rect x="900.4" y="4" width="22.8" height="1.6" fill="#3a9a8a" opacity=".55"/><rect x="924.5" y="2.2" width="13.9" height="1.8" fill="#a07a3a"/><rect x="924.5" y="4" width="13.9" height="1.6" fill="#3a9a8a" opacity=".55"/><rect x="939.7" y="2.2" width="40.9" height="1.8" fill="#a07a3a"/><rect x="939.7" y="4" width="40.9" height="1.6" fill="#3a9a8a" opacity=".55"/><rect x="982.2" y="2.2" width="13.3" height="1.8" fill="#a07a3a"/><rect x="982.2" y="4" width="13.3" height="1.6" fill="#3a9a8a" opacity=".55"/><rect x="996.6" y="2.2" width="43.1" height="1.8" fill="#a07a3a"/><rect x="996.6" y="4" width="43.1" height="1.6" fill="#3a9a8a" opacity=".55"/><rect x="1041.2" y="2.2" width="29.6" height="1.8" fill="#a07a3a"/><rect x="1041.2" y="4" width="29.6" height="1.6" fill="#3a9a8a" opacity=".55"/><rect x="1071.6" y="2.2" width="16.4" height="1.8" fill="#a07a3a"/><rect x="1071.6" y="4" width="16.4" height="1.6" fill="#3a9a8a" opacity=".55"/><rect x="1088.6" y="2" width="3" height="7" fill="#0b5c60" opacity=".8"/><rect x="1124" y="2" width="3" height="7" fill="#0b5c60" opacity=".8"/><rect x="1136.8" y="2.2" width="24.6" height="1.8" fill="#a07a3a"/><rect x="1136.8" y="4" width="24.6" height="1.6" fill="#3a9a8a" opacity=".55"/><rect x="1162.5" y="2.2" width="37.5" height="1.8" fill="#a07a3a"/><rect x="1162.5" y="4" width="37.5" height="1.6" fill="#3a9a8a" opacity=".55"/></svg>
<div class="a" style="left:165px;top:498px;width:74px;height:13.5px;background:#126a6e;border-radius:2px"></div>
<svg style="left:167.5px;top:499.5px" width="11" height="11" viewBox="0 0 11 11"><path d="M7.2 1A4.8 4.8 0 1 0 10 4" fill="none" stroke="#f0f8f8" stroke-width="1.3"/><path d="M5.5 5.5L8.6 1.8" stroke="#f0f8f8" stroke-width="1.3"/><circle cx="5.5" cy="5.5" r="1.1" fill="#f0f8f8"/></svg>
<div class="t" style="left:184px;top:499px;font-size:12px;color:#eef6f6;letter-spacing:-1.023px;">Speed1.3X</div>
<div class="a" style="left:242px;top:498px;width:166px;height:13.5px;background:#126a6e;border-radius:2px 0 0 2px"></div>
<div class="t" style="left:245.5px;top:499px;font-size:12px;color:#eef6f6;letter-spacing:-0.49px;">Screen Recording (09-Aug-24 11</div>
<div class="a" style="left:412px;top:498px;width:74px;height:13.5px;background:#126a6e;border-radius:2px"></div>
<svg style="left:414.5px;top:499.5px" width="11" height="11" viewBox="0 0 11 11"><path d="M7.2 1A4.8 4.8 0 1 0 10 4" fill="none" stroke="#f0f8f8" stroke-width="1.3"/><path d="M5.5 5.5L8.6 1.8" stroke="#f0f8f8" stroke-width="1.3"/><circle cx="5.5" cy="5.5" r="1.1" fill="#f0f8f8"/></svg>
<div class="t" style="left:430.7px;top:499px;font-size:12px;color:#eef6f6;letter-spacing:-0.923px;">Speed1.3X</div>
<div class="a" style="left:489px;top:498px;width:253px;height:13.5px;background:#126a6e;border-radius:2px"></div>
<div class="t" style="left:492px;top:499px;font-size:12px;color:#eef6f6;letter-spacing:-0.369px;">Screen Recording (09-Aug-24 11-41-24 AM).wmv</div>
<div class="a" style="left:745px;top:498px;width:62px;height:13.5px;background:#126a6e;border-radius:2px"></div>
<div class="t" style="left:748px;top:499px;font-size:12px;color:#eef6f6;letter-spacing:-0.789px;">00:03:49:10</div>
<div class="a" style="left:118.3px;top:511.6px;width:37px;height:36px;background:#050505;border-radius:2px;overflow:hidden">
<div class="a" style="left:0;top:0;width:37px;height:12px;background:#f1efe8"></div><div class="a" style="left:0;top:0;width:37px;height:2.2px;background:#2a78c8"></div><div class="a" style="left:17px;top:2.5px;width:16px;height:9.5px;background:#c8b08c;clip-path:polygon(0 100%,20% 60%,50% 0,75% 45%,100% 60%,100% 100%)"></div><div class="a" style="left:2px;top:5px;width:12px;height:1px;background:#9ab"></div><div class="a" style="left:2px;top:8px;width:9px;height:1px;background:#abc"></div><div class="a" style="left:9px;top:3.5px;width:6px;height:1.2px;background:#2a78c8"></div>
<div class="t" style="left:0.5px;top:12.4px;font-size:4.6px;font-weight:700;color:#f4f4f4;letter-spacing:-0.1px">ow to add Multi in</div>
<div class="t" style="left:0.5px;top:17px;font-size:4.6px;font-weight:700;color:#f4f4f4;letter-spacing:-0.1px">Languages in Te</div>
<div class="t" style="left:0.5px;top:21.6px;font-size:4.6px;font-weight:700;color:#f4f4f4;letter-spacing:-0.1px">Theme Footer in</div>
<div class="t" style="left:0.5px;top:26.2px;font-size:4.6px;font-weight:700;color:#f4f4f4;letter-spacing:-0.1px">Website Using own</div>
<div class="t" style="left:0.5px;top:30.8px;font-size:4.6px;font-weight:700;color:#f4f4f4;letter-spacing:-0.1px">WordPress Plugi</div>
<svg style="left:12.5px;top:10.5px" width="12" height="13" viewBox="0 0 12 13"><path d="M1.5 11.5l1-3.2L8.7 2l2.2 2.2-6.2 6.3z" fill="#111" stroke="#fff" stroke-width="1.6" stroke-linejoin="round"/></svg>
</div>
<div class="a" style="left:163px;top:571px;width:436.5px;height:44px;background:#12356a;border-radius:3px;overflow:hidden">
<svg style="left:0;top:30px" width="436.5" height="14" viewBox="0 0 436.5 14"><rect x="0" y="9.8" width="1.2" height="1.4" fill="#2377b2"/><rect x="1.5" y="9.8" width="1.2" height="1.4" fill="#2377b2"/><rect x="3" y="9.8" width="1.2" height="1.4" fill="#2377b2"/><rect x="4.5" y="9.4" width="1.2" height="2.3" fill="#2377b2"/><rect x="6" y="9.8" width="1.2" height="1.4" fill="#2377b2"/><rect x="7.5" y="9.8" width="1.2" height="1.4" fill="#2377b2"/><rect x="9" y="9.8" width="1.2" height="1.4" fill="#2377b2"/><rect x="10.5" y="9.4" width="1.2" height="2.1" fill="#2377b2"/><rect x="12" y="9.7" width="1.2" height="1.6" fill="#2377b2"/><rect x="13.5" y="9.8" width="1.2" height="1.4" fill="#2377b2"/><rect x="15" y="9.8" width="1.2" height="1.4" fill="#2377b2"/><rect x="16.5" y="9.8" width="1.2" height="1.4" fill="#2377b2"/><rect x="18" y="9.8" width="1.2" height="1.4" fill="#2377b2"/><rect x="19.5" y="9.8" width="1.2" height="1.4" fill="#2377b2"/><rect x="21" y="9.6" width="1.2" height="1.8" fill="#2377b2"/><rect x="22.5" y="9.7" width="1.2" height="1.7" fill="#2377b2"/><rect x="24" y="9.8" width="1.2" height="1.4" fill="#2377b2"/><rect x="25.5" y="9.8" width="1.2" height="1.4" fill="#2377b2"/><rect x="27" y="9.4" width="1.2" height="2.3" fill="#2377b2"/><rect x="28.5" y="9.8" width="1.2" height="1.4" fill="#2377b2"/><rect x="30" y="9.8" width="1.2" height="1.4" fill="#2377b2"/><rect x="31.5" y="9.3" width="1.2" height="2.3" fill="#2377b2"/><rect x="33" y="9.5" width="1.2" height="2" fill="#2377b2"/><rect x="34.5" y="9.8" width="1.2" height="1.4" fill="#2377b2"/><rect x="36" y="9.7" width="1.2" height="1.6" fill="#2377b2"/><rect x="37.5" y="9.8" width="1.2" height="1.4" fill="#2377b2"/><rect x="39" y="9.8" width="1.2" height="1.4" fill="#2377b2"/><rect x="40.5" y="9.8" width="1.2" height="1.4" fill="#2377b2"/><rect x="42" y="9.8" width="1.2" height="1.4" fill="#2377b2"/><rect x="43.5" y="9.5" width="1.2" height="2" fill="#2377b2"/><rect x="45" y="9.5" width="1.2" height="2" fill="#2377b2"/><rect x="46.5" y="9.8" width="1.2" height="1.4" fill="#2377b2"/><rect x="48" y="9.8" width="1.2" height="1.4" fill="#2377b2"/><rect x="49.5" y="9.5" width="1.2" height="2" fill="#2377b2"/><rect x="51" y="9.8" width="1.2" height="1.4" fill="#2377b2"/><rect x="52.5" y="9.3" width="1.2" height="2.4" fill="#2377b2"/><rect x="54" y="9.8" width="1.2" height="1.4" fill="#2377b2"/><rect x="55.5" y="9.8" width="1.2" height="1.4" fill="#2377b2"/><rect x="57" y="9.8" width="1.2" height="1.4" fill="#2377b2"/><rect x="58.5" y="9.8" width="1.2" height="1.4" fill="#2377b2"/><rect x="60" y="9.4" width="1.2" height="2.2" fill="#2377b2"/><rect x="61.5" y="9.8" width="1.2" height="1.4" fill="#2377b2"/><rect x="63" y="9.8" width="1.2" height="1.4" fill="#2377b2"/><rect x="64.5" y="9.8" width="1.2" height="1.4" fill="#2377b2"/><rect x="66" y="9.5" width="1.2" height="2" fill="#2377b2"/><rect x="67.5" y="9.8" width="1.2" height="1.4" fill="#2377b2"/><rect x="69" y="9.6" width="1.2" height="1.8" fill="#2377b2"/><rect x="70.5" y="9.8" width="1.2" height="1.4" fill="#2377b2"/><rect x="72" y="9.8" width="1.2" height="1.4" fill="#2377b2"/><rect x="73.5" y="9.8" width="1.2" height="1.4" fill="#2377b2"/><rect x="75" y="9.8" width="1.2" height="1.4" fill="#2377b2"/><rect x="76.5" y="9.8" width="1.2" height="1.4" fill="#2377b2"/><rect x="78" y="9.4" width="1.2" height="2.1" fill="#2377b2"/><rect x="79.5" y="9.8" width="1.2" height="1.4" fill="#2377b2"/><rect x="81" y="9.8" width="1.2" height="1.4" fill="#2377b2"/><rect x="82.5" y="9.8" width="1.2" height="1.4" fill="#2377b2"/><rect x="84" y="9.8" width="1.2" height="1.4" fill="#2377b2"/><rect x="85.5" y="9.5" width="1.2" height="2.1" fill="#2377b2"/><rect x="87" y="9.8" width="1.2" height="1.4" fill="#2377b2"/><rect x="88.5" y="9.8" width="1.2" height="1.4" fill="#2377b2"/><rect x="90" y="9.8" width="1.2" height="1.4" fill="#2377b2"/><rect x="91.5" y="9.8" width="1.2" height="1.4" fill="#2377b2"/><rect x="93" y="9.8" width="1.2" height="1.4" fill="#2377b2"/><rect x="94.5" y="9.8" width="1.2" height="1.4" fill="#2377b2"/><rect x="96" y="9.8" width="1.2" height="1.4" fill="#2377b2"/><rect x="97.5" y="9.6" width="1.2" height="1.8" fill="#2377b2"/><rect x="99" y="9.5" width="1.2" height="2" fill="#2377b2"/><rect x="100.5" y="9.8" width="1.2" height="1.4" fill="#2377b2"/><rect x="102" y="9.5" width="1.2" height="2.1" fill="#2377b2"/><rect x="103.5" y="9.8" width="1.2" height="1.4" fill="#2377b2"/><rect x="105" y="8.9" width="1.2" height="3.2" fill="#2377b2"/><rect x="106.5" y="7.8" width="1.2" height="5.3" fill="#2377b2"/><rect x="108" y="7.5" width="1.2" height="5.9" fill="#2377b2"/><rect x="109.5" y="6.8" width="1.2" height="7.1" fill="#2377b2"/><rect x="111" y="6" width="1.2" height="7.9" fill="#2377b2"/><rect x="112.5" y="7" width="1.2" height="6.9" fill="#2377b2"/><rect x="114" y="6.7" width="1.2" height="7.2" fill="#2377b2"/><rect x="115.5" y="5.9" width="1.2" height="8" fill="#2377b2"/><rect x="117" y="7.3" width="1.2" height="6.3" fill="#2377b2"/><rect x="118.5" y="6.6" width="1.2" height="7.3" fill="#2377b2"/><rect x="120" y="6" width="1.2" height="7.9" fill="#2377b2"/><rect x="121.5" y="6.6" width="1.2" height="7.3" fill="#2377b2"/><rect x="123" y="6.3" width="1.2" height="7.6" fill="#2377b2"/><rect x="124.5" y="6.7" width="1.2" height="7.2" fill="#2377b2"/><rect x="126" y="7.2" width="1.2" height="6.6" fill="#2377b2"/><rect x="127.5" y="5.9" width="1.2" height="8" fill="#2377b2"/><rect x="129" y="6.1" width="1.2" height="7.8" fill="#2377b2"/><rect x="130.5" y="7.1" width="1.2" height="6.8" fill="#2377b2"/><rect x="132" y="6" width="1.2" height="7.9" fill="#2377b2"/><rect x="133.5" y="6.7" width="1.2" height="7.2" fill="#2377b2"/><rect x="135" y="6.7" width="1.2" height="7.2" fill="#2377b2"/><rect x="136.5" y="5.9" width="1.2" height="8" fill="#2377b2"/><rect x="138" y="6.2" width="1.2" height="7.7" fill="#2377b2"/><rect x="139.5" y="5.1" width="1.2" height="8.8" fill="#2377b2"/><rect x="141" y="5" width="1.2" height="8.9" fill="#2377b2"/><rect x="142.5" y="5.9" width="1.2" height="8" fill="#2377b2"/><rect x="144" y="6" width="1.2" height="7.9" fill="#2377b2"/><rect x="145.5" y="6" width="1.2" height="7.9" fill="#2377b2"/><rect x="147" y="5.6" width="1.2" height="8.3" fill="#2377b2"/><rect x="148.5" y="5.3" width="1.2" height="8.6" fill="#2377b2"/><rect x="150" y="5.7" width="1.2" height="8.2" fill="#2377b2"/><rect x="151.5" y="5.7" width="1.2" height="8.2" fill="#2377b2"/><rect x="153" y="6" width="1.2" height="7.9" fill="#2377b2"/><rect x="154.5" y="5.9" width="1.2" height="8" fill="#2377b2"/><rect x="156" y="5.1" width="1.2" height="8.8" fill="#2377b2"/><rect x="157.5" y="5.6" width="1.2" height="8.3" fill="#2377b2"/><rect x="159" y="4.6" width="1.2" height="9.3" fill="#2377b2"/><rect x="160.5" y="4.7" width="1.2" height="9.2" fill="#2377b2"/><rect x="162" y="4.7" width="1.2" height="9.2" fill="#2377b2"/><rect x="163.5" y="5.9" width="1.2" height="8" fill="#2377b2"/><rect x="165" y="5.8" width="1.2" height="8.1" fill="#2377b2"/><rect x="166.5" y="6.1" width="1.2" height="7.8" fill="#2377b2"/><rect x="168" y="5.6" width="1.2" height="8.3" fill="#2377b2"/><rect x="169.5" y="6.3" width="1.2" height="7.6" fill="#2377b2"/><rect x="171" y="6.4" width="1.2" height="7.5" fill="#2377b2"/><rect x="172.5" y="5.7" width="1.2" height="8.2" fill="#2377b2"/><rect x="174" y="5.9" width="1.2" height="8" fill="#2377b2"/><rect x="175.5" y="6" width="1.2" height="7.9" fill="#2377b2"/><rect x="177" y="5.9" width="1.2" height="8" fill="#2377b2"/><rect x="178.5" y="6.6" width="1.2" height="7.3" fill="#2377b2"/><rect x="180" y="6.5" width="1.2" height="7.4" fill="#2377b2"/><rect x="181.5" y="6" width="1.2" height="7.9" fill="#2377b2"/><rect x="183" y="6.2" width="1.2" height="7.7" fill="#2377b2"/><rect x="184.5" y="7.2" width="1.2" height="6.5" fill="#2377b2"/><rect x="186" y="7.3" width="1.2" height="6.4" fill="#2377b2"/><rect x="187.5" y="7.3" width="1.2" height="6.5" fill="#2377b2"/><rect x="189" y="6.4" width="1.2" height="7.5" fill="#2377b2"/><rect x="190.5" y="6.6" width="1.2" height="7.3" fill="#2377b2"/><rect x="192" y="6.8" width="1.2" height="7.1" fill="#2377b2"/><rect x="193.5" y="6.8" width="1.2" height="7.1" fill="#2377b2"/><rect x="195" y="6" width="1.2" height="7.9" fill="#2377b2"/><rect x="196.5" y="6.2" width="1.2" height="7.7" fill="#2377b2"/><rect x="198" y="5.9" width="1.2" height="8" fill="#2377b2"/><rect x="199.5" y="6" width="1.2" height="7.9" fill="#2377b2"/><rect x="201" y="6.3" width="1.2" height="7.6" fill="#2377b2"/><rect x="202.5" y="6.4" width="1.2" height="7.5" fill="#2377b2"/><rect x="204" y="5.9" width="1.2" height="8" fill="#2377b2"/><rect x="205.5" y="6.7" width="1.2" height="7.2" fill="#2377b2"/><rect x="207" y="5.6" width="1.2" height="8.3" fill="#2377b2"/><rect x="208.5" y="6.2" width="1.2" height="7.7" fill="#2377b2"/><rect x="210" y="6.1" width="1.2" height="7.8" fill="#2377b2"/><rect x="211.5" y="5.7" width="1.2" height="8.2" fill="#2377b2"/><rect x="213" y="4.9" width="1.2" height="9" fill="#2377b2"/><rect x="214.5" y="6.1" width="1.2" height="7.8" fill="#2377b2"/><rect x="216" y="5.4" width="1.2" height="8.5" fill="#2377b2"/><rect x="217.5" y="5.3" width="1.2" height="8.6" fill="#2377b2"/><rect x="219" y="5.9" width="1.2" height="8" fill="#2377b2"/><rect x="220.5" y="4.9" width="1.2" height="9" fill="#2377b2"/><rect x="222" y="5.2" width="1.2" height="8.7" fill="#2377b2"/><rect x="223.5" y="5" width="1.2" height="8.9" fill="#2377b2"/><rect x="225" y="5.9" width="1.2" height="8" fill="#2377b2"/><rect x="226.5" y="5.7" width="1.2" height="8.2" fill="#2377b2"/><rect x="228" y="5.9" width="1.2" height="8" fill="#2377b2"/><rect x="229.5" y="5.5" width="1.2" height="8.4" fill="#2377b2"/><rect x="231" y="4.7" width="1.2" height="9.2" fill="#2377b2"/><rect x="232.5" y="6" width="1.2" height="7.9" fill="#2377b2"/><rect x="234" y="5.3" width="1.2" height="8.6" fill="#2377b2"/><rect x="235.5" y="5.1" width="1.2" height="8.8" fill="#2377b2"/><rect x="237" y="6.3" width="1.2" height="7.6" fill="#2377b2"/><rect x="238.5" y="6" width="1.2" height="7.9" fill="#2377b2"/><rect x="240" y="6.4" width="1.2" height="7.5" fill="#2377b2"/><rect x="241.5" y="6.6" width="1.2" height="7.3" fill="#2377b2"/><rect x="243" y="6.5" width="1.2" height="7.4" fill="#2377b2"/><rect x="244.5" y="6.4" width="1.2" height="7.5" fill="#2377b2"/><rect x="246" y="7" width="1.2" height="6.9" fill="#2377b2"/><rect x="247.5" y="5.9" width="1.2" height="8" fill="#2377b2"/><rect x="249" y="6.5" width="1.2" height="7.4" fill="#2377b2"/><rect x="250.5" y="6.9" width="1.2" height="7" fill="#2377b2"/><rect x="252" y="5.9" width="1.2" height="8" fill="#2377b2"/><rect x="253.5" y="6.9" width="1.2" height="7" fill="#2377b2"/><rect x="255" y="7.3" width="1.2" height="6.3" fill="#2377b2"/><rect x="256.5" y="7.3" width="1.2" height="6.3" fill="#2377b2"/><rect x="258" y="6.3" width="1.2" height="7.6" fill="#2377b2"/><rect x="259.5" y="6.3" width="1.2" height="7.6" fill="#2377b2"/><rect x="261" y="6.3" width="1.2" height="7.6" fill="#2377b2"/><rect x="262.5" y="6.5" width="1.2" height="7.4" fill="#2377b2"/><rect x="264" y="7" width="1.2" height="6.9" fill="#2377b2"/><rect x="265.5" y="7.8" width="1.2" height="5.3" fill="#2377b2"/><rect x="267" y="8.8" width="1.2" height="3.3" fill="#2377b2"/><rect x="268.5" y="9.5" width="1.2" height="1.9" fill="#2377b2"/><rect x="270" y="9.8" width="1.2" height="1.4" fill="#2377b2"/><rect x="271.5" y="9.8" width="1.2" height="1.4" fill="#2377b2"/><rect x="273" y="9.8" width="1.2" height="1.4" fill="#2377b2"/><rect x="274.5" y="9.8" width="1.2" height="1.4" fill="#2377b2"/><rect x="276" y="9.8" width="1.2" height="1.4" fill="#2377b2"/><rect x="277.5" y="9.6" width="1.2" height="1.9" fill="#2377b2"/><rect x="279" y="9.8" width="1.2" height="1.4" fill="#2377b2"/><rect x="280.5" y="9.3" width="1.2" height="2.4" fill="#2377b2"/><rect x="282" y="9.8" width="1.2" height="1.4" fill="#2377b2"/><rect x="283.5" y="9.8" width="1.2" height="1.4" fill="#2377b2"/><rect x="285" y="9.8" width="1.2" height="1.4" fill="#2377b2"/><rect x="286.5" y="9.8" width="1.2" height="1.4" fill="#2377b2"/><rect x="288" y="9.8" width="1.2" height="1.4" fill="#2377b2"/><rect x="289.5" y="9.3" width="1.2" height="2.4" fill="#2377b2"/><rect x="291" y="9.8" width="1.2" height="1.4" fill="#2377b2"/><rect x="292.5" y="9.8" width="1.2" height="1.4" fill="#2377b2"/><rect x="294" y="9.5" width="1.2" height="2" fill="#2377b2"/><rect x="295.5" y="9.8" width="1.2" height="1.4" fill="#2377b2"/><rect x="297" y="9.8" width="1.2" height="1.4" fill="#2377b2"/><rect x="298.5" y="9.8" width="1.2" height="1.4" fill="#2377b2"/><rect x="300" y="9.8" width="1.2" height="1.4" fill="#2377b2"/><rect x="301.5" y="9.8" width="1.2" height="1.4" fill="#2377b2"/><rect x="303" y="9.4" width="1.2" height="2.3" fill="#2377b2"/><rect x="304.5" y="9.8" width="1.2" height="1.4" fill="#2377b2"/><rect x="306" y="9.8" width="1.2" height="1.4" fill="#2377b2"/><rect x="307.5" y="9.8" width="1.2" height="1.4" fill="#2377b2"/><rect x="309" y="9.8" width="1.2" height="1.4" fill="#2377b2"/><rect x="310.5" y="9.8" width="1.2" height="1.4" fill="#2377b2"/><rect x="312" y="9.8" width="1.2" height="1.4" fill="#2377b2"/><rect x="313.5" y="9.8" width="1.2" height="1.4" fill="#2377b2"/><rect x="315" y="9.8" width="1.2" height="1.4" fill="#2377b2"/><rect x="316.5" y="9.8" width="1.2" height="1.4" fill="#2377b2"/><rect x="318" y="9.8" width="1.2" height="1.4" fill="#2377b2"/><rect x="319.5" y="9.8" width="1.2" height="1.4" fill="#2377b2"/><rect x="321" y="9.8" width="1.2" height="1.4" fill="#2377b2"/><rect x="322.5" y="9.8" width="1.2" height="1.4" fill="#2377b2"/><rect x="324" y="9.8" width="1.2" height="1.4" fill="#2377b2"/><rect x="325.5" y="9.4" width="1.2" height="2.1" fill="#2377b2"/><rect x="327" y="9.8" width="1.2" height="1.4" fill="#2377b2"/><rect x="328.5" y="9.4" width="1.2" height="2.2" fill="#2377b2"/><rect x="330" y="9.8" width="1.2" height="1.4" fill="#2377b2"/><rect x="331.5" y="9.8" width="1.2" height="1.4" fill="#2377b2"/><rect x="333" y="9.8" width="1.2" height="1.4" fill="#2377b2"/><rect x="334.5" y="9.8" width="1.2" height="1.4" fill="#2377b2"/><rect x="336" y="9.8" width="1.2" height="1.4" fill="#2377b2"/><rect x="337.5" y="9.8" width="1.2" height="1.4" fill="#2377b2"/><rect x="339" y="9.8" width="1.2" height="1.4" fill="#2377b2"/><rect x="340.5" y="9.8" width="1.2" height="1.4" fill="#2377b2"/><rect x="342" y="9.8" width="1.2" height="1.4" fill="#2377b2"/><rect x="343.5" y="9.8" width="1.2" height="1.4" fill="#2377b2"/><rect x="345" y="9.8" width="1.2" height="1.4" fill="#2377b2"/><rect x="346.5" y="9" width="1.2" height="3.1" fill="#2377b2"/><rect x="348" y="8.4" width="1.2" height="4.2" fill="#2377b2"/><rect x="349.5" y="6.8" width="1.2" height="7.1" fill="#2377b2"/><rect x="351" y="6.4" width="1.2" height="7.5" fill="#2377b2"/><rect x="352.5" y="6.8" width="1.2" height="7.1" fill="#2377b2"/><rect x="354" y="6.6" width="1.2" height="7.3" fill="#2377b2"/><rect x="355.5" y="6.4" width="1.2" height="7.5" fill="#2377b2"/><rect x="357" y="6.6" width="1.2" height="7.3" fill="#2377b2"/><rect x="358.5" y="7.5" width="1.2" height="6" fill="#2377b2"/><rect x="360" y="6.9" width="1.2" height="7" fill="#2377b2"/><rect x="361.5" y="7.4" width="1.2" height="6.2" fill="#2377b2"/><rect x="363" y="7.7" width="1.2" height="5.6" fill="#2377b2"/><rect x="364.5" y="6.8" width="1.2" height="7.1" fill="#2377b2"/><rect x="366" y="8.1" width="1.2" height="4.8" fill="#2377b2"/><rect x="367.5" y="7.5" width="1.2" height="6" fill="#2377b2"/><rect x="369" y="7.7" width="1.2" height="5.6" fill="#2377b2"/><rect x="370.5" y="8" width="1.2" height="5" fill="#2377b2"/><rect x="372" y="7.7" width="1.2" height="5.5" fill="#2377b2"/><rect x="373.5" y="8.1" width="1.2" height="4.9" fill="#2377b2"/><rect x="375" y="7.7" width="1.2" height="5.7" fill="#2377b2"/><rect x="376.5" y="6.9" width="1.2" height="7" fill="#2377b2"/><rect x="378" y="7.7" width="1.2" height="5.6" fill="#2377b2"/><rect x="379.5" y="7.9" width="1.2" height="5.2" fill="#2377b2"/><rect x="381" y="7.7" width="1.2" height="5.6" fill="#2377b2"/><rect x="382.5" y="7.5" width="1.2" height="6" fill="#2377b2"/><rect x="384" y="6.8" width="1.2" height="7.1" fill="#2377b2"/><rect x="385.5" y="6.5" width="1.2" height="7.4" fill="#2377b2"/><rect x="387" y="6.7" width="1.2" height="7.2" fill="#2377b2"/><rect x="388.5" y="6.9" width="1.2" height="7" fill="#2377b2"/><rect x="390" y="7.2" width="1.2" height="6.6" fill="#2377b2"/><rect x="391.5" y="6.9" width="1.2" height="7" fill="#2377b2"/><rect x="393" y="6.4" width="1.2" height="7.5" fill="#2377b2"/><rect x="394.5" y="6.2" width="1.2" height="7.7" fill="#2377b2"/><rect x="396" y="6.5" width="1.2" height="7.4" fill="#2377b2"/><rect x="397.5" y="6.8" width="1.2" height="7.1" fill="#2377b2"/><rect x="399" y="7.2" width="1.2" height="6.6" fill="#2377b2"/><rect x="400.5" y="7.2" width="1.2" height="6.6" fill="#2377b2"/><rect x="402" y="6.6" width="1.2" height="7.3" fill="#2377b2"/><rect x="403.5" y="7.2" width="1.2" height="6.6" fill="#2377b2"/><rect x="405" y="6.3" width="1.2" height="7.6" fill="#2377b2"/><rect x="406.5" y="6.8" width="1.2" height="7.1" fill="#2377b2"/><rect x="408" y="6.3" width="1.2" height="7.6" fill="#2377b2"/><rect x="409.5" y="7.3" width="1.2" height="6.4" fill="#2377b2"/><rect x="411" y="7.4" width="1.2" height="6.2" fill="#2377b2"/><rect x="412.5" y="7.3" width="1.2" height="6.5" fill="#2377b2"/><rect x="414" y="7.5" width="1.2" height="6.1" fill="#2377b2"/><rect x="415.5" y="7.8" width="1.2" height="5.3" fill="#2377b2"/><rect x="417" y="7" width="1.2" height="6.9" fill="#2377b2"/><rect x="418.5" y="6.8" width="1.2" height="7.1" fill="#2377b2"/><rect x="420" y="7.3" width="1.2" height="6.3" fill="#2377b2"/><rect x="421.5" y="7.9" width="1.2" height="5.1" fill="#2377b2"/><rect x="423" y="8.7" width="1.2" height="3.6" fill="#2377b2"/><rect x="424.5" y="9" width="1.2" height="2.9" fill="#2377b2"/><rect x="426" y="9.7" width="1.2" height="1.7" fill="#2377b2"/><rect x="427.5" y="9.6" width="1.2" height="1.9" fill="#2377b2"/><rect x="429" y="9.8" width="1.2" height="1.4" fill="#2377b2"/><rect x="430.5" y="9.6" width="1.2" height="1.9" fill="#2377b2"/><rect x="432" y="9.8" width="1.2" height="1.4" fill="#2377b2"/><rect x="433.5" y="9.8" width="1.2" height="1.4" fill="#2377b2"/><rect x="435" y="9.8" width="1.2" height="1.4" fill="#2377b2"/><path d="M0 10.6H436.5" stroke="#55a4d6" stroke-width="1.3" stroke-dasharray="2.5 0.7 1 0.6" opacity=".85"/></svg>
<div class="a" style="left:0;top:0;width:250px;height:13.5px;background:#2a4b7e;border-radius:2px"></div>
<div class="t" style="left:3.8px;top:1.5px;font-size:12px;color:#e8eef8;letter-spacing:-0.281px;">Warm-Memories-Emotional-Inspiring-Piano.mp3</div>
</div>
<div class="a" style="left:601px;top:571px;width:437.5px;height:44px;background:#12356a;border-radius:3px;overflow:hidden">
<svg style="left:0;top:30px" width="437.5" height="14" viewBox="0 0 437.5 14"><rect x="0" y="9.5" width="1.2" height="2.1" fill="#2377b2"/><rect x="1.5" y="9.4" width="1.2" height="2.2" fill="#2377b2"/><rect x="3" y="9.8" width="1.2" height="1.4" fill="#2377b2"/><rect x="4.5" y="9.8" width="1.2" height="1.4" fill="#2377b2"/><rect x="6" y="9.8" width="1.2" height="1.4" fill="#2377b2"/><rect x="7.5" y="9.3" width="1.2" height="2.4" fill="#2377b2"/><rect x="9" y="9.8" width="1.2" height="1.4" fill="#2377b2"/><rect x="10.5" y="9.8" width="1.2" height="1.4" fill="#2377b2"/><rect x="12" y="9.7" width="1.2" height="1.6" fill="#2377b2"/><rect x="13.5" y="9.8" width="1.2" height="1.4" fill="#2377b2"/><rect x="15" y="9.8" width="1.2" height="1.4" fill="#2377b2"/><rect x="16.5" y="9.8" width="1.2" height="1.4" fill="#2377b2"/><rect x="18" y="9.8" width="1.2" height="1.4" fill="#2377b2"/><rect x="19.5" y="9.8" width="1.2" height="1.4" fill="#2377b2"/><rect x="21" y="9.8" width="1.2" height="1.4" fill="#2377b2"/><rect x="22.5" y="9.8" width="1.2" height="1.4" fill="#2377b2"/><rect x="24" y="9.6" width="1.2" height="1.8" fill="#2377b2"/><rect x="25.5" y="9.8" width="1.2" height="1.4" fill="#2377b2"/><rect x="27" y="9.8" width="1.2" height="1.4" fill="#2377b2"/><rect x="28.5" y="9.8" width="1.2" height="1.4" fill="#2377b2"/><rect x="30" y="9.7" width="1.2" height="1.6" fill="#2377b2"/><rect x="31.5" y="9.8" width="1.2" height="1.4" fill="#2377b2"/><rect x="33" y="9.6" width="1.2" height="1.8" fill="#2377b2"/><rect x="34.5" y="9.8" width="1.2" height="1.4" fill="#2377b2"/><rect x="36" y="9.8" width="1.2" height="1.4" fill="#2377b2"/><rect x="37.5" y="9.7" width="1.2" height="1.6" fill="#2377b2"/><rect x="39" y="9.8" width="1.2" height="1.4" fill="#2377b2"/><rect x="40.5" y="9.8" width="1.2" height="1.4" fill="#2377b2"/><rect x="42" y="9.8" width="1.2" height="1.4" fill="#2377b2"/><rect x="43.5" y="9.8" width="1.2" height="1.4" fill="#2377b2"/><rect x="45" y="9.8" width="1.2" height="1.4" fill="#2377b2"/><rect x="46.5" y="9.8" width="1.2" height="1.4" fill="#2377b2"/><rect x="48" y="9.8" width="1.2" height="1.4" fill="#2377b2"/><rect x="49.5" y="9.8" width="1.2" height="1.4" fill="#2377b2"/><rect x="51" y="9.8" width="1.2" height="1.4" fill="#2377b2"/><rect x="52.5" y="9.8" width="1.2" height="1.4" fill="#2377b2"/><rect x="54" y="9.8" width="1.2" height="1.4" fill="#2377b2"/><rect x="55.5" y="9.8" width="1.2" height="1.4" fill="#2377b2"/><rect x="57" y="9.8" width="1.2" height="1.4" fill="#2377b2"/><rect x="58.5" y="9.4" width="1.2" height="2.3" fill="#2377b2"/><rect x="60" y="9.8" width="1.2" height="1.4" fill="#2377b2"/><rect x="61.5" y="9.8" width="1.2" height="1.4" fill="#2377b2"/><rect x="63" y="9.8" width="1.2" height="1.4" fill="#2377b2"/><rect x="64.5" y="9.8" width="1.2" height="1.4" fill="#2377b2"/><rect x="66" y="9.8" width="1.2" height="1.4" fill="#2377b2"/><rect x="67.5" y="9.7" width="1.2" height="1.6" fill="#2377b2"/><rect x="69" y="9.8" width="1.2" height="1.4" fill="#2377b2"/><rect x="70.5" y="9.6" width="1.2" height="1.7" fill="#2377b2"/><rect x="72" y="9.8" width="1.2" height="1.4" fill="#2377b2"/><rect x="73.5" y="9.8" width="1.2" height="1.4" fill="#2377b2"/><rect x="75" y="9.8" width="1.2" height="1.4" fill="#2377b2"/><rect x="76.5" y="9.8" width="1.2" height="1.4" fill="#2377b2"/><rect x="78" y="9.3" width="1.2" height="2.3" fill="#2377b2"/><rect x="79.5" y="9.7" width="1.2" height="1.5" fill="#2377b2"/><rect x="81" y="9.8" width="1.2" height="1.4" fill="#2377b2"/><rect x="82.5" y="9.8" width="1.2" height="1.4" fill="#2377b2"/><rect x="84" y="9.8" width="1.2" height="1.4" fill="#2377b2"/><rect x="85.5" y="9.8" width="1.2" height="1.4" fill="#2377b2"/><rect x="87" y="9.8" width="1.2" height="1.4" fill="#2377b2"/><rect x="88.5" y="9.7" width="1.2" height="1.5" fill="#2377b2"/><rect x="90" y="9.8" width="1.2" height="1.4" fill="#2377b2"/><rect x="91.5" y="9.8" width="1.2" height="1.4" fill="#2377b2"/><rect x="93" y="9.8" width="1.2" height="1.4" fill="#2377b2"/><rect x="94.5" y="9.8" width="1.2" height="1.4" fill="#2377b2"/><rect x="96" y="9.8" width="1.2" height="1.4" fill="#2377b2"/><rect x="97.5" y="9.8" width="1.2" height="1.4" fill="#2377b2"/><rect x="99" y="9.8" width="1.2" height="1.4" fill="#2377b2"/><rect x="100.5" y="9.7" width="1.2" height="1.6" fill="#2377b2"/><rect x="102" y="9.5" width="1.2" height="1.9" fill="#2377b2"/><rect x="103.5" y="9.8" width="1.2" height="1.4" fill="#2377b2"/><rect x="105" y="8.9" width="1.2" height="3.2" fill="#2377b2"/><rect x="106.5" y="8.2" width="1.2" height="4.6" fill="#2377b2"/><rect x="108" y="6.9" width="1.2" height="7" fill="#2377b2"/><rect x="109.5" y="7" width="1.2" height="6.9" fill="#2377b2"/><rect x="111" y="6.2" width="1.2" height="7.7" fill="#2377b2"/><rect x="112.5" y="7.1" width="1.2" height="6.8" fill="#2377b2"/><rect x="114" y="5.8" width="1.2" height="8.1" fill="#2377b2"/><rect x="115.5" y="7.3" width="1.2" height="6.5" fill="#2377b2"/><rect x="117" y="6.5" width="1.2" height="7.4" fill="#2377b2"/><rect x="118.5" y="6.6" width="1.2" height="7.3" fill="#2377b2"/><rect x="120" y="7.3" width="1.2" height="6.4" fill="#2377b2"/><rect x="121.5" y="6.2" width="1.2" height="7.7" fill="#2377b2"/><rect x="123" y="6.6" width="1.2" height="7.3" fill="#2377b2"/><rect x="124.5" y="6.9" width="1.2" height="7" fill="#2377b2"/><rect x="126" y="6" width="1.2" height="7.9" fill="#2377b2"/><rect x="127.5" y="6.9" width="1.2" height="7" fill="#2377b2"/><rect x="129" y="7.2" width="1.2" height="6.7" fill="#2377b2"/><rect x="130.5" y="6" width="1.2" height="7.9" fill="#2377b2"/><rect x="132" y="5.9" width="1.2" height="8" fill="#2377b2"/><rect x="133.5" y="6" width="1.2" height="7.9" fill="#2377b2"/><rect x="135" y="5.6" width="1.2" height="8.3" fill="#2377b2"/><rect x="136.5" y="5.9" width="1.2" height="8" fill="#2377b2"/><rect x="138" y="5.2" width="1.2" height="8.7" fill="#2377b2"/><rect x="139.5" y="5.2" width="1.2" height="8.7" fill="#2377b2"/><rect x="141" y="6.3" width="1.2" height="7.6" fill="#2377b2"/><rect x="142.5" y="5.8" width="1.2" height="8.1" fill="#2377b2"/><rect x="144" y="5.4" width="1.2" height="8.5" fill="#2377b2"/><rect x="145.5" y="5.5" width="1.2" height="8.4" fill="#2377b2"/><rect x="147" y="5.1" width="1.2" height="8.8" fill="#2377b2"/><rect x="148.5" y="4.7" width="1.2" height="9.2" fill="#2377b2"/><rect x="150" y="4.9" width="1.2" height="9" fill="#2377b2"/><rect x="151.5" y="5.7" width="1.2" height="8.2" fill="#2377b2"/><rect x="153" y="4.9" width="1.2" height="9" fill="#2377b2"/><rect x="154.5" y="5.9" width="1.2" height="8" fill="#2377b2"/><rect x="156" y="5.5" width="1.2" height="8.4" fill="#2377b2"/><rect x="157.5" y="4.6" width="1.2" height="9.3" fill="#2377b2"/><rect x="159" y="5" width="1.2" height="8.9" fill="#2377b2"/><rect x="160.5" y="5.2" width="1.2" height="8.7" fill="#2377b2"/><rect x="162" y="5.5" width="1.2" height="8.4" fill="#2377b2"/><rect x="163.5" y="5.1" width="1.2" height="8.8" fill="#2377b2"/><rect x="165" y="5.1" width="1.2" height="8.8" fill="#2377b2"/><rect x="166.5" y="6.1" width="1.2" height="7.8" fill="#2377b2"/><rect x="168" y="5.9" width="1.2" height="8" fill="#2377b2"/><rect x="169.5" y="5.6" width="1.2" height="8.3" fill="#2377b2"/><rect x="171" y="5.3" width="1.2" height="8.6" fill="#2377b2"/><rect x="172.5" y="6.5" width="1.2" height="7.4" fill="#2377b2"/><rect x="174" y="6.8" width="1.2" height="7.1" fill="#2377b2"/><rect x="175.5" y="6.7" width="1.2" height="7.2" fill="#2377b2"/><rect x="177" y="6.2" width="1.2" height="7.7" fill="#2377b2"/><rect x="178.5" y="7" width="1.2" height="6.9" fill="#2377b2"/><rect x="180" y="6" width="1.2" height="7.9" fill="#2377b2"/><rect x="181.5" y="6.6" width="1.2" height="7.3" fill="#2377b2"/><rect x="183" y="6.1" width="1.2" height="7.8" fill="#2377b2"/><rect x="184.5" y="6.1" width="1.2" height="7.8" fill="#2377b2"/><rect x="186" y="6.1" width="1.2" height="7.8" fill="#2377b2"/><rect x="187.5" y="5.9" width="1.2" height="8" fill="#2377b2"/><rect x="189" y="6.8" width="1.2" height="7.1" fill="#2377b2"/><rect x="190.5" y="6.1" width="1.2" height="7.8" fill="#2377b2"/><rect x="192" y="6.1" width="1.2" height="7.8" fill="#2377b2"/><rect x="193.5" y="6.6" width="1.2" height="7.3" fill="#2377b2"/><rect x="195" y="6.8" width="1.2" height="7.1" fill="#2377b2"/><rect x="196.5" y="6.4" width="1.2" height="7.5" fill="#2377b2"/><rect x="198" y="6.2" width="1.2" height="7.7" fill="#2377b2"/><rect x="199.5" y="6.5" width="1.2" height="7.4" fill="#2377b2"/><rect x="201" y="5.6" width="1.2" height="8.3" fill="#2377b2"/><rect x="202.5" y="6.9" width="1.2" height="7" fill="#2377b2"/><rect x="204" y="6.3" width="1.2" height="7.6" fill="#2377b2"/><rect x="205.5" y="6.6" width="1.2" height="7.3" fill="#2377b2"/><rect x="207" y="6" width="1.2" height="7.9" fill="#2377b2"/><rect x="208.5" y="5.4" width="1.2" height="8.5" fill="#2377b2"/><rect x="210" y="5.7" width="1.2" height="8.2" fill="#2377b2"/><rect x="211.5" y="5.1" width="1.2" height="8.8" fill="#2377b2"/><rect x="213" y="4.8" width="1.2" height="9.1" fill="#2377b2"/><rect x="214.5" y="4.7" width="1.2" height="9.2" fill="#2377b2"/><rect x="216" y="4.9" width="1.2" height="9" fill="#2377b2"/><rect x="217.5" y="5.5" width="1.2" height="8.4" fill="#2377b2"/><rect x="219" y="5.1" width="1.2" height="8.8" fill="#2377b2"/><rect x="220.5" y="5" width="1.2" height="8.9" fill="#2377b2"/><rect x="222" y="4.7" width="1.2" height="9.2" fill="#2377b2"/><rect x="223.5" y="5.9" width="1.2" height="8" fill="#2377b2"/><rect x="225" y="5.7" width="1.2" height="8.2" fill="#2377b2"/><rect x="226.5" y="4.6" width="1.2" height="9.3" fill="#2377b2"/><rect x="228" y="5.3" width="1.2" height="8.6" fill="#2377b2"/><rect x="229.5" y="5.9" width="1.2" height="8" fill="#2377b2"/><rect x="231" y="5.3" width="1.2" height="8.6" fill="#2377b2"/><rect x="232.5" y="5.9" width="1.2" height="8" fill="#2377b2"/><rect x="234" y="5.3" width="1.2" height="8.6" fill="#2377b2"/><rect x="235.5" y="5.4" width="1.2" height="8.5" fill="#2377b2"/><rect x="237" y="5.3" width="1.2" height="8.6" fill="#2377b2"/><rect x="238.5" y="6.6" width="1.2" height="7.3" fill="#2377b2"/><rect x="240" y="6.3" width="1.2" height="7.6" fill="#2377b2"/><rect x="241.5" y="6.5" width="1.2" height="7.4" fill="#2377b2"/><rect x="243" y="6" width="1.2" height="7.9" fill="#2377b2"/><rect x="244.5" y="6" width="1.2" height="7.9" fill="#2377b2"/><rect x="246" y="5.8" width="1.2" height="8.1" fill="#2377b2"/><rect x="247.5" y="6.3" width="1.2" height="7.6" fill="#2377b2"/><rect x="249" y="7.1" width="1.2" height="6.8" fill="#2377b2"/><rect x="250.5" y="7" width="1.2" height="6.9" fill="#2377b2"/><rect x="252" y="6.4" width="1.2" height="7.5" fill="#2377b2"/><rect x="253.5" y="6.5" width="1.2" height="7.4" fill="#2377b2"/><rect x="255" y="6.8" width="1.2" height="7.1" fill="#2377b2"/><rect x="256.5" y="6.1" width="1.2" height="7.8" fill="#2377b2"/><rect x="258" y="6.2" width="1.2" height="7.7" fill="#2377b2"/><rect x="259.5" y="6.4" width="1.2" height="7.5" fill="#2377b2"/><rect x="261" y="6.5" width="1.2" height="7.4" fill="#2377b2"/><rect x="262.5" y="6" width="1.2" height="7.9" fill="#2377b2"/><rect x="264" y="7.4" width="1.2" height="6.3" fill="#2377b2"/><rect x="265.5" y="7.9" width="1.2" height="5.2" fill="#2377b2"/><rect x="267" y="8.4" width="1.2" height="4.2" fill="#2377b2"/><rect x="268.5" y="9.6" width="1.2" height="1.9" fill="#2377b2"/><rect x="270" y="9.8" width="1.2" height="1.4" fill="#2377b2"/><rect x="271.5" y="9.8" width="1.2" height="1.4" fill="#2377b2"/><rect x="273" y="9.8" width="1.2" height="1.4" fill="#2377b2"/><rect x="274.5" y="9.8" width="1.2" height="1.4" fill="#2377b2"/><rect x="276" y="9.8" width="1.2" height="1.4" fill="#2377b2"/><rect x="277.5" y="9.4" width="1.2" height="2.1" fill="#2377b2"/><rect x="279" y="9.8" width="1.2" height="1.4" fill="#2377b2"/><rect x="280.5" y="9.8" width="1.2" height="1.4" fill="#2377b2"/><rect x="282" y="9.8" width="1.2" height="1.4" fill="#2377b2"/><rect x="283.5" y="9.8" width="1.2" height="1.4" fill="#2377b2"/><rect x="285" y="9.8" width="1.2" height="1.4" fill="#2377b2"/><rect x="286.5" y="9.8" width="1.2" height="1.4" fill="#2377b2"/><rect x="288" y="9.8" width="1.2" height="1.4" fill="#2377b2"/><rect x="289.5" y="9.8" width="1.2" height="1.4" fill="#2377b2"/><rect x="291" y="9.8" width="1.2" height="1.4" fill="#2377b2"/><rect x="292.5" y="9.4" width="1.2" height="2.2" fill="#2377b2"/><rect x="294" y="9.8" width="1.2" height="1.4" fill="#2377b2"/><rect x="295.5" y="9.8" width="1.2" height="1.4" fill="#2377b2"/><rect x="297" y="9.8" width="1.2" height="1.4" fill="#2377b2"/><rect x="298.5" y="9.8" width="1.2" height="1.4" fill="#2377b2"/><rect x="300" y="9.8" width="1.2" height="1.4" fill="#2377b2"/><rect x="301.5" y="9.7" width="1.2" height="1.6" fill="#2377b2"/><rect x="303" y="9.6" width="1.2" height="1.9" fill="#2377b2"/><rect x="304.5" y="9.4" width="1.2" height="2.3" fill="#2377b2"/><rect x="306" y="9.8" width="1.2" height="1.4" fill="#2377b2"/><rect x="307.5" y="9.8" width="1.2" height="1.4" fill="#2377b2"/><rect x="309" y="9.8" width="1.2" height="1.4" fill="#2377b2"/><rect x="310.5" y="9.4" width="1.2" height="2.3" fill="#2377b2"/><rect x="312" y="9.8" width="1.2" height="1.4" fill="#2377b2"/><rect x="313.5" y="9.8" width="1.2" height="1.4" fill="#2377b2"/><rect x="315" y="9.8" width="1.2" height="1.4" fill="#2377b2"/><rect x="316.5" y="9.8" width="1.2" height="1.4" fill="#2377b2"/><rect x="318" y="9.8" width="1.2" height="1.5" fill="#2377b2"/><rect x="319.5" y="9.8" width="1.2" height="1.4" fill="#2377b2"/><rect x="321" y="9.8" width="1.2" height="1.4" fill="#2377b2"/><rect x="322.5" y="9.8" width="1.2" height="1.4" fill="#2377b2"/><rect x="324" y="9.6" width="1.2" height="1.8" fill="#2377b2"/><rect x="325.5" y="9.7" width="1.2" height="1.5" fill="#2377b2"/><rect x="327" y="9.8" width="1.2" height="1.4" fill="#2377b2"/><rect x="328.5" y="9.8" width="1.2" height="1.4" fill="#2377b2"/><rect x="330" y="9.8" width="1.2" height="1.4" fill="#2377b2"/><rect x="331.5" y="9.8" width="1.2" height="1.4" fill="#2377b2"/><rect x="333" y="9.8" width="1.2" height="1.4" fill="#2377b2"/><rect x="334.5" y="9.8" width="1.2" height="1.4" fill="#2377b2"/><rect x="336" y="9.8" width="1.2" height="1.4" fill="#2377b2"/><rect x="337.5" y="9.8" width="1.2" height="1.4" fill="#2377b2"/><rect x="339" y="9.8" width="1.2" height="1.4" fill="#2377b2"/><rect x="340.5" y="9.8" width="1.2" height="1.4" fill="#2377b2"/><rect x="342" y="9.5" width="1.2" height="2.1" fill="#2377b2"/><rect x="343.5" y="9.3" width="1.2" height="2.4" fill="#2377b2"/><rect x="345" y="9.8" width="1.2" height="1.4" fill="#2377b2"/><rect x="346.5" y="8.9" width="1.2" height="3.1" fill="#2377b2"/><rect x="348" y="8" width="1.2" height="5" fill="#2377b2"/><rect x="349.5" y="7.4" width="1.2" height="6.3" fill="#2377b2"/><rect x="351" y="7" width="1.2" height="6.9" fill="#2377b2"/><rect x="352.5" y="6.8" width="1.2" height="7.1" fill="#2377b2"/><rect x="354" y="6.3" width="1.2" height="7.6" fill="#2377b2"/><rect x="355.5" y="7.5" width="1.2" height="5.9" fill="#2377b2"/><rect x="357" y="6.8" width="1.2" height="7.1" fill="#2377b2"/><rect x="358.5" y="7.1" width="1.2" height="6.8" fill="#2377b2"/><rect x="360" y="7.1" width="1.2" height="6.8" fill="#2377b2"/><rect x="361.5" y="7.9" width="1.2" height="5.2" fill="#2377b2"/><rect x="363" y="7.8" width="1.2" height="5.4" fill="#2377b2"/><rect x="364.5" y="7.4" width="1.2" height="6.2" fill="#2377b2"/><rect x="366" y="7.8" width="1.2" height="5.4" fill="#2377b2"/><rect x="367.5" y="7.2" width="1.2" height="6.5" fill="#2377b2"/><rect x="369" y="7.7" width="1.2" height="5.7" fill="#2377b2"/><rect x="370.5" y="6.9" width="1.2" height="7" fill="#2377b2"/><rect x="372" y="7.2" width="1.2" height="6.6" fill="#2377b2"/><rect x="373.5" y="8.1" width="1.2" height="4.8" fill="#2377b2"/><rect x="375" y="7" width="1.2" height="6.9" fill="#2377b2"/><rect x="376.5" y="7.1" width="1.2" height="6.8" fill="#2377b2"/><rect x="378" y="8" width="1.2" height="5" fill="#2377b2"/><rect x="379.5" y="7.3" width="1.2" height="6.5" fill="#2377b2"/><rect x="381" y="7.7" width="1.2" height="5.6" fill="#2377b2"/><rect x="382.5" y="6.7" width="1.2" height="7.2" fill="#2377b2"/><rect x="384" y="7" width="1.2" height="6.9" fill="#2377b2"/><rect x="385.5" y="7.4" width="1.2" height="6.1" fill="#2377b2"/><rect x="387" y="6.3" width="1.2" height="7.6" fill="#2377b2"/><rect x="388.5" y="6.8" width="1.2" height="7.1" fill="#2377b2"/><rect x="390" y="6.6" width="1.2" height="7.3" fill="#2377b2"/><rect x="391.5" y="6.9" width="1.2" height="7" fill="#2377b2"/><rect x="393" y="6.6" width="1.2" height="7.3" fill="#2377b2"/><rect x="394.5" y="7.1" width="1.2" height="6.8" fill="#2377b2"/><rect x="396" y="6.2" width="1.2" height="7.7" fill="#2377b2"/><rect x="397.5" y="6.7" width="1.2" height="7.2" fill="#2377b2"/><rect x="399" y="6.3" width="1.2" height="7.6" fill="#2377b2"/><rect x="400.5" y="6.3" width="1.2" height="7.6" fill="#2377b2"/><rect x="402" y="6.4" width="1.2" height="7.5" fill="#2377b2"/><rect x="403.5" y="6.9" width="1.2" height="7" fill="#2377b2"/><rect x="405" y="7.1" width="1.2" height="6.8" fill="#2377b2"/><rect x="406.5" y="7" width="1.2" height="6.9" fill="#2377b2"/><rect x="408" y="6.6" width="1.2" height="7.3" fill="#2377b2"/><rect x="409.5" y="6.4" width="1.2" height="7.5" fill="#2377b2"/><rect x="411" y="7.2" width="1.2" height="6.6" fill="#2377b2"/><rect x="412.5" y="7.3" width="1.2" height="6.3" fill="#2377b2"/><rect x="414" y="6.9" width="1.2" height="7" fill="#2377b2"/><rect x="415.5" y="6.9" width="1.2" height="7" fill="#2377b2"/><rect x="417" y="6.8" width="1.2" height="7.1" fill="#2377b2"/><rect x="418.5" y="7" width="1.2" height="6.9" fill="#2377b2"/><rect x="420" y="7.7" width="1.2" height="5.6" fill="#2377b2"/><rect x="421.5" y="7.6" width="1.2" height="5.7" fill="#2377b2"/><rect x="423" y="8.3" width="1.2" height="4.4" fill="#2377b2"/><rect x="424.5" y="9" width="1.2" height="2.9" fill="#2377b2"/><rect x="426" y="9.7" width="1.2" height="1.6" fill="#2377b2"/><rect x="427.5" y="9.8" width="1.2" height="1.4" fill="#2377b2"/><rect x="429" y="9.8" width="1.2" height="1.4" fill="#2377b2"/><rect x="430.5" y="9.7" width="1.2" height="1.6" fill="#2377b2"/><rect x="432" y="9.3" width="1.2" height="2.3" fill="#2377b2"/><rect x="433.5" y="9.8" width="1.2" height="1.4" fill="#2377b2"/><rect x="435" y="9.4" width="1.2" height="2.3" fill="#2377b2"/><rect x="436.5" y="9.8" width="1.2" height="1.4" fill="#2377b2"/><path d="M0 10.6H437.5" stroke="#55a4d6" stroke-width="1.3" stroke-dasharray="2.5 0.7 1 0.6" opacity=".85"/></svg>
<div class="a" style="left:0;top:0;width:250px;height:13.5px;background:#2a4b7e;border-radius:2px"></div>
<div class="t" style="left:3.8px;top:1.5px;font-size:12px;color:#e8eef8;letter-spacing:-0.281px;">Warm-Memories-Emotional-Inspiring-Piano.mp3</div>
</div>
<div class="a" style="left:1040px;top:571px;width:170px;height:44px;background:#12356a;border-radius:3px;overflow:hidden">
<svg style="left:0;top:30px" width="170" height="14" viewBox="0 0 170 14"><rect x="0" y="9.8" width="1.2" height="1.4" fill="#2377b2"/><rect x="1.5" y="9.8" width="1.2" height="1.4" fill="#2377b2"/><rect x="3" y="9.8" width="1.2" height="1.4" fill="#2377b2"/><rect x="4.5" y="9.8" width="1.2" height="1.4" fill="#2377b2"/><rect x="6" y="9.8" width="1.2" height="1.4" fill="#2377b2"/><rect x="7.5" y="9.7" width="1.2" height="1.7" fill="#2377b2"/><rect x="9" y="9.8" width="1.2" height="1.4" fill="#2377b2"/><rect x="10.5" y="9.8" width="1.2" height="1.4" fill="#2377b2"/><rect x="12" y="9.8" width="1.2" height="1.4" fill="#2377b2"/><rect x="13.5" y="9.8" width="1.2" height="1.4" fill="#2377b2"/><rect x="15" y="9.8" width="1.2" height="1.4" fill="#2377b2"/><rect x="16.5" y="9.8" width="1.2" height="1.4" fill="#2377b2"/><rect x="18" y="9.8" width="1.2" height="1.4" fill="#2377b2"/><rect x="19.5" y="9.8" width="1.2" height="1.4" fill="#2377b2"/><rect x="21" y="9.8" width="1.2" height="1.4" fill="#2377b2"/><rect x="22.5" y="9.8" width="1.2" height="1.4" fill="#2377b2"/><rect x="24" y="9.4" width="1.2" height="2.3" fill="#2377b2"/><rect x="25.5" y="9.8" width="1.2" height="1.4" fill="#2377b2"/><rect x="27" y="9.7" width="1.2" height="1.7" fill="#2377b2"/><rect x="28.5" y="9.8" width="1.2" height="1.4" fill="#2377b2"/><rect x="30" y="9.4" width="1.2" height="2.2" fill="#2377b2"/><rect x="31.5" y="9.8" width="1.2" height="1.4" fill="#2377b2"/><rect x="33" y="9.8" width="1.2" height="1.4" fill="#2377b2"/><rect x="34.5" y="9.6" width="1.2" height="1.7" fill="#2377b2"/><rect x="36" y="9.8" width="1.2" height="1.4" fill="#2377b2"/><rect x="37.5" y="9.8" width="1.2" height="1.4" fill="#2377b2"/><rect x="39" y="9.8" width="1.2" height="1.4" fill="#2377b2"/><rect x="40.5" y="9.8" width="1.2" height="1.4" fill="#2377b2"/><rect x="42" y="9.8" width="1.2" height="1.4" fill="#2377b2"/><rect x="43.5" y="9.5" width="1.2" height="2" fill="#2377b2"/><rect x="45" y="9.8" width="1.2" height="1.4" fill="#2377b2"/><rect x="46.5" y="9.8" width="1.2" height="1.4" fill="#2377b2"/><rect x="48" y="9.8" width="1.2" height="1.4" fill="#2377b2"/><rect x="49.5" y="9.8" width="1.2" height="1.4" fill="#2377b2"/><rect x="51" y="9.8" width="1.2" height="1.4" fill="#2377b2"/><rect x="52.5" y="9.8" width="1.2" height="1.4" fill="#2377b2"/><rect x="54" y="9.8" width="1.2" height="1.4" fill="#2377b2"/><rect x="55.5" y="9.8" width="1.2" height="1.4" fill="#2377b2"/><rect x="57" y="9.8" width="1.2" height="1.4" fill="#2377b2"/><rect x="58.5" y="9.8" width="1.2" height="1.4" fill="#2377b2"/><rect x="60" y="9.8" width="1.2" height="1.4" fill="#2377b2"/><rect x="61.5" y="9.8" width="1.2" height="1.4" fill="#2377b2"/><rect x="63" y="9.8" width="1.2" height="1.4" fill="#2377b2"/><rect x="64.5" y="9.4" width="1.2" height="2.3" fill="#2377b2"/><rect x="66" y="9.8" width="1.2" height="1.4" fill="#2377b2"/><rect x="67.5" y="9.8" width="1.2" height="1.4" fill="#2377b2"/><rect x="69" y="9.8" width="1.2" height="1.4" fill="#2377b2"/><rect x="70.5" y="9.8" width="1.2" height="1.4" fill="#2377b2"/><rect x="72" y="9.8" width="1.2" height="1.4" fill="#2377b2"/><rect x="73.5" y="9.7" width="1.2" height="1.6" fill="#2377b2"/><rect x="75" y="9.6" width="1.2" height="1.7" fill="#2377b2"/><rect x="76.5" y="9.8" width="1.2" height="1.4" fill="#2377b2"/><rect x="78" y="9.8" width="1.2" height="1.4" fill="#2377b2"/><rect x="79.5" y="9.8" width="1.2" height="1.4" fill="#2377b2"/><rect x="81" y="9.8" width="1.2" height="1.4" fill="#2377b2"/><rect x="82.5" y="9.8" width="1.2" height="1.4" fill="#2377b2"/><rect x="84" y="9.4" width="1.2" height="2.2" fill="#2377b2"/><rect x="85.5" y="9.8" width="1.2" height="1.4" fill="#2377b2"/><rect x="87" y="9.8" width="1.2" height="1.4" fill="#2377b2"/><rect x="88.5" y="9.6" width="1.2" height="1.9" fill="#2377b2"/><rect x="90" y="9.8" width="1.2" height="1.4" fill="#2377b2"/><rect x="91.5" y="9.8" width="1.2" height="1.4" fill="#2377b2"/><rect x="93" y="9.3" width="1.2" height="2.3" fill="#2377b2"/><rect x="94.5" y="9.8" width="1.2" height="1.4" fill="#2377b2"/><rect x="96" y="9.8" width="1.2" height="1.4" fill="#2377b2"/><rect x="97.5" y="9.8" width="1.2" height="1.4" fill="#2377b2"/><rect x="99" y="9.8" width="1.2" height="1.4" fill="#2377b2"/><rect x="100.5" y="9.8" width="1.2" height="1.4" fill="#2377b2"/><rect x="102" y="9.5" width="1.2" height="2" fill="#2377b2"/><rect x="103.5" y="9.8" width="1.2" height="1.4" fill="#2377b2"/><rect x="105" y="8.9" width="1.2" height="3.2" fill="#2377b2"/><rect x="106.5" y="7.7" width="1.2" height="5.6" fill="#2377b2"/><rect x="108" y="7.5" width="1.2" height="6" fill="#2377b2"/><rect x="109.5" y="6" width="1.2" height="7.9" fill="#2377b2"/><rect x="111" y="6.3" width="1.2" height="7.6" fill="#2377b2"/><rect x="112.5" y="6.5" width="1.2" height="7.4" fill="#2377b2"/><rect x="114" y="6.5" width="1.2" height="7.4" fill="#2377b2"/><rect x="115.5" y="6" width="1.2" height="7.9" fill="#2377b2"/><rect x="117" y="6.6" width="1.2" height="7.3" fill="#2377b2"/><rect x="118.5" y="6.3" width="1.2" height="7.6" fill="#2377b2"/><rect x="120" y="6.7" width="1.2" height="7.2" fill="#2377b2"/><rect x="121.5" y="7.3" width="1.2" height="6.4" fill="#2377b2"/><rect x="123" y="6.4" width="1.2" height="7.5" fill="#2377b2"/><rect x="124.5" y="6.7" width="1.2" height="7.2" fill="#2377b2"/><rect x="126" y="6.7" width="1.2" height="7.2" fill="#2377b2"/><rect x="127.5" y="7.2" width="1.2" height="6.7" fill="#2377b2"/><rect x="129" y="7.2" width="1.2" height="6.7" fill="#2377b2"/><rect x="130.5" y="6.1" width="1.2" height="7.8" fill="#2377b2"/><rect x="132" y="6.1" width="1.2" height="7.8" fill="#2377b2"/><rect x="133.5" y="5.7" width="1.2" height="8.2" fill="#2377b2"/><rect x="135" y="5.4" width="1.2" height="8.5" fill="#2377b2"/><rect x="136.5" y="6" width="1.2" height="7.9" fill="#2377b2"/><rect x="138" y="5.8" width="1.2" height="8.1" fill="#2377b2"/><rect x="139.5" y="6.5" width="1.2" height="7.4" fill="#2377b2"/><rect x="141" y="6.1" width="1.2" height="7.8" fill="#2377b2"/><rect x="142.5" y="6.2" width="1.2" height="7.7" fill="#2377b2"/><rect x="144" y="5.9" width="1.2" height="8" fill="#2377b2"/><rect x="145.5" y="5.6" width="1.2" height="8.3" fill="#2377b2"/><rect x="147" y="6" width="1.2" height="7.9" fill="#2377b2"/><rect x="148.5" y="5.9" width="1.2" height="8" fill="#2377b2"/><rect x="150" y="5.4" width="1.2" height="8.5" fill="#2377b2"/><rect x="151.5" y="6" width="1.2" height="7.9" fill="#2377b2"/><rect x="153" y="4.5" width="1.2" height="9.4" fill="#2377b2"/><rect x="154.5" y="4.9" width="1.2" height="9" fill="#2377b2"/><rect x="156" y="5.8" width="1.2" height="8.1" fill="#2377b2"/><rect x="157.5" y="4.7" width="1.2" height="9.2" fill="#2377b2"/><rect x="159" y="5.4" width="1.2" height="8.5" fill="#2377b2"/><rect x="160.5" y="5.7" width="1.2" height="8.2" fill="#2377b2"/><rect x="162" y="5.6" width="1.2" height="8.3" fill="#2377b2"/><rect x="163.5" y="6.1" width="1.2" height="7.8" fill="#2377b2"/><rect x="165" y="4.9" width="1.2" height="9" fill="#2377b2"/><rect x="166.5" y="6.1" width="1.2" height="7.8" fill="#2377b2"/><rect x="168" y="6" width="1.2" height="7.9" fill="#2377b2"/><rect x="169.5" y="5.5" width="1.2" height="8.4" fill="#2377b2"/><path d="M0 10.6H170" stroke="#55a4d6" stroke-width="1.3" stroke-dasharray="2.5 0.7 1 0.6" opacity=".85"/></svg>
<div class="a" style="left:0;top:0;width:165px;height:13.5px;background:#2a4b7e;border-radius:2px"></div>
<div class="t" style="left:3.8px;top:1.5px;font-size:12px;color:#e8eef8;letter-spacing:-0.281px;">Warm-Memories-Emotional-Inspiring-Piano.mp3</div>
<svg style="left:100px;top:0" width="70" height="44" viewBox="0 0 70 44"><path d="M0 13.5H70V44H64C60 28 46 15.5 22 14z" fill="#090b12"/></svg>
</div>
<div class="a" style="left:15px;top:449.5px;width:92.5px;height:24px;background:#202022;border-radius:3px"></div>
<div class="a" style="left:15px;top:476px;width:92.5px;height:24.5px;background:#202022;border-radius:3px"></div>
<div class="a" style="left:15px;top:527.8px;width:92.5px;height:23px;background:#202022;border-radius:3px"></div>
<div class="a" style="left:15px;top:591.5px;width:92.5px;height:23.5px;background:#202022;border-radius:3px"></div>
<div class="t" style="left:18.5px;top:454.59999999999997px;font-family:'Liberation Serif',serif;font-size:14px;color:#5e5e60;letter-spacing:0.5px">TI</div>
<div class="a" style="left:40.8px;top:453.7px;width:15px;height:15px;border-radius:50%;background:#29292b"></div>
<svg style="left:44.3px;top:456.5px" width="8" height="9" viewBox="0 0 8 9"><path d="M2 4V2.7a2 2 0 0 1 4 0V4" fill="none" stroke="#ececec" stroke-width="1.2"/><rect x="0.3" y="3.8" width="7.4" height="5" rx="1" fill="#ececec"/><path d="M2.2 6.3h3.6" stroke="#2a2a2c" stroke-width="1.1"/></svg>
<div class="a" style="left:63.8px;top:453.7px;width:15px;height:15px;border-radius:50%;background:#29292b"></div>
<svg style="left:66.3px;top:458px" width="10" height="6.4" viewBox="0 0 10 6.4"><path d="M0.2 3.2C1.7 1 3.3 0.2 5 0.2S8.3 1 9.8 3.2C8.3 5.4 6.7 6.2 5 6.2S1.7 5.4 0.2 3.2z" fill="#ececec"/><circle cx="5" cy="3.2" r="1.9" fill="none" stroke="#2a2a2c" stroke-width="0.9"/></svg>
<div class="a" style="left:86.5px;top:453.7px;width:15px;height:15px;border-radius:50%;background:#1d1d1f"></div>
<svg style="left:19.5px;top:481.9px" width="11" height="11" viewBox="0 0 11 11"><path d="M5.5 0.6a4.9 4.9 0 1 0 4.9 4.9c-2.5.300-5.2-2.1-4.9-4.9z" fill="none" stroke="#9a9a9c" stroke-width="1.1"/><path d="M5.5 0.6c2 .200 4.6 2.8 4.9 4.9" fill="none" stroke="#9a9a9c" stroke-width="1.1"/></svg>
<div class="a" style="left:40.8px;top:479.9px;width:15px;height:15px;border-radius:50%;background:#29292b"></div>
<svg style="left:44.3px;top:482.7px" width="8" height="9" viewBox="0 0 8 9"><path d="M2 4V2.7a2 2 0 0 1 4 0V4" fill="none" stroke="#ececec" stroke-width="1.2"/><rect x="0.3" y="3.8" width="7.4" height="5" rx="1" fill="#ececec"/><path d="M2.2 6.3h3.6" stroke="#2a2a2c" stroke-width="1.1"/></svg>
<div class="a" style="left:63.8px;top:479.9px;width:15px;height:15px;border-radius:50%;background:#29292b"></div>
<svg style="left:66.3px;top:484.2px" width="10" height="6.4" viewBox="0 0 10 6.4"><path d="M0.2 3.2C1.7 1 3.3 0.2 5 0.2S8.3 1 9.8 3.2C8.3 5.4 6.7 6.2 5 6.2S1.7 5.4 0.2 3.2z" fill="#ececec"/><circle cx="5" cy="3.2" r="1.9" fill="none" stroke="#2a2a2c" stroke-width="0.9"/></svg>
<div class="a" style="left:86.5px;top:479.9px;width:15px;height:15px;border-radius:50%;background:#1d1d1f"></div>
<svg style="left:19.5px;top:534.8px" width="12" height="9" viewBox="0 0 12 9"><rect x="0.5" y="0.5" width="11" height="8" fill="none" stroke="#9a9a9c" stroke-width="1"/><path d="M4.8 2.6v3.8l3-1.9z" fill="#9a9a9c"/></svg>
<div class="a" style="left:40.8px;top:531.8px;width:15px;height:15px;border-radius:50%;background:#29292b"></div>
<svg style="left:44.3px;top:534.5999999999999px" width="8" height="9" viewBox="0 0 8 9"><path d="M2 4V2.7a2 2 0 0 1 4 0V4" fill="none" stroke="#ececec" stroke-width="1.2"/><rect x="0.3" y="3.8" width="7.4" height="5" rx="1" fill="#ececec"/><path d="M2.2 6.3h3.6" stroke="#2a2a2c" stroke-width="1.1"/></svg>
<div class="a" style="left:63.8px;top:531.8px;width:15px;height:15px;border-radius:50%;background:#29292b"></div>
<svg style="left:66.3px;top:536.0999999999999px" width="10" height="6.4" viewBox="0 0 10 6.4"><path d="M0.2 3.2C1.7 1 3.3 0.2 5 0.2S8.3 1 9.8 3.2C8.3 5.4 6.7 6.2 5 6.2S1.7 5.4 0.2 3.2z" fill="#ececec"/><circle cx="5" cy="3.2" r="1.9" fill="none" stroke="#2a2a2c" stroke-width="0.9"/></svg>
<div class="a" style="left:86.5px;top:531.8px;width:15px;height:15px;border-radius:50%;background:#29292b"></div>
<svg style="left:88.5px;top:535.0999999999999px" width="11.5" height="8.4" viewBox="0 0 12 9"><path d="M0.7 3h1.8L5.3 0.8v7.4L2.5 6H0.7z" fill="none" stroke="#ececec" stroke-width="1.2" stroke-linejoin="round"/><path d="M7.2 2.8a2.4 2.4 0 0 1 0 3.4M9 1.3a4.6 4.6 0 0 1 0 6.4" fill="none" stroke="#ececec" stroke-width="1.1"/></svg>
<svg style="left:19px;top:597.2px" width="12" height="12" viewBox="0 0 12 12"><path d="M8 1A5.4 5.4 0 1 0 11.2 4.5" fill="none" stroke="#9a9a9c" stroke-width="1.1"/><circle cx="5.5" cy="7.2" r="1.5" fill="none" stroke="#9a9a9c" stroke-width="1.1"/><path d="M7 7.2V2.4l2 .900" fill="none" stroke="#9a9a9c" stroke-width="1.1"/></svg>
<div class="a" style="left:40.8px;top:595.7px;width:15px;height:15px;border-radius:50%;background:#29292b"></div>
<svg style="left:44.3px;top:598.5px" width="8" height="9" viewBox="0 0 8 9"><path d="M2 4V2.7a2 2 0 0 1 4 0V4" fill="none" stroke="#ececec" stroke-width="1.2"/><rect x="0.3" y="3.8" width="7.4" height="5" rx="1" fill="#ececec"/><path d="M2.2 6.3h3.6" stroke="#2a2a2c" stroke-width="1.1"/></svg>
<div class="a" style="left:63.8px;top:595.7px;width:15px;height:15px;border-radius:50%;background:#1d1d1f"></div>
<div class="a" style="left:86.5px;top:595.7px;width:15px;height:15px;border-radius:50%;background:#29292b"></div>
<svg style="left:88.5px;top:599px" width="11.5" height="8.4" viewBox="0 0 12 9"><path d="M0.7 3h1.8L5.3 0.8v7.4L2.5 6H0.7z" fill="none" stroke="#ececec" stroke-width="1.2" stroke-linejoin="round"/><path d="M7.2 2.8a2.4 2.4 0 0 1 0 3.4M9 1.3a4.6 4.6 0 0 1 0 6.4" fill="none" stroke="#ececec" stroke-width="1.1"/></svg>
<div class="a" style="left:683.3px;top:436px;width:1.9px;height:198px;background:#e6e6e6;"></div>
<svg style="left:679.2px;top:424.8px" width="10" height="12.5" viewBox="0 0 10 12.5"><path d="M1 2.2a1.2 1.2 0 0 1 1.2-1.2h5.6a1.2 1.2 0 0 1 1.2 1.2v5.3a4 4 0 0 1-8 0z" fill="#161618" stroke="#f2f2f2" stroke-width="1.7" stroke-linejoin="round"/></svg>
</body></html>
